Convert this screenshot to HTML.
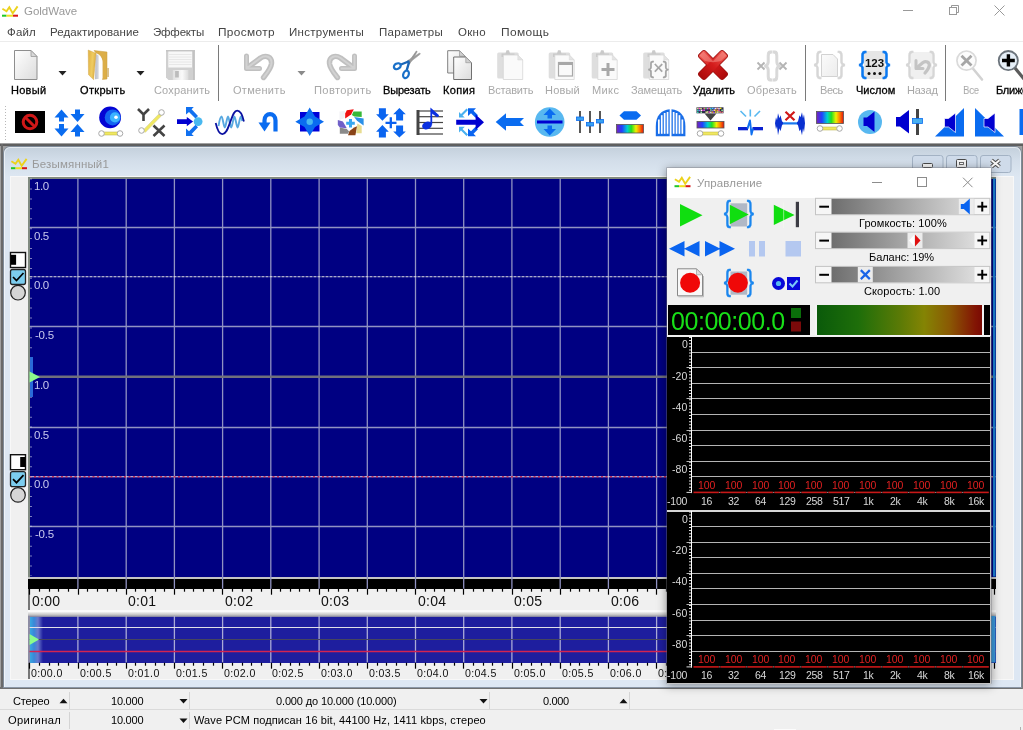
<!DOCTYPE html>
<html><head><meta charset="utf-8"><title>GoldWave</title>
<style>
*{box-sizing:border-box;margin:0;padding:0}
html,body{width:1023px;height:730px;overflow:hidden;background:#fff;font-family:"Liberation Sans","DejaVu Sans",sans-serif;font-size:12px;color:#000}
.a{position:absolute}
.t{position:absolute;white-space:nowrap;line-height:1;will-change:transform}
#titlebar{left:0;top:0;width:1023px;height:22px;background:#fff}
#menubar{left:0;top:22px;width:1023px;height:20px;background:#fff}
#tb{left:0;top:41px;width:1023px;height:102px;background:#fff;border-top:1px solid #ececec}
#mdi{left:0;top:143px;width:1023px;height:547px;background:#a0a0a0}
#status{left:0;top:689px;width:1023px;height:41px;background:#f0f0f0}
svg{position:absolute;left:0;top:0;overflow:visible}
</style></head><body>
<div id="titlebar" class="a"></div><div id="menubar" class="a"></div><div id="tb" class="a"></div>
<div id="mdi" class="a"></div>
<div class="a" style="left:0;top:144px;width:1023px;height:2px;background:#5f5f5f"></div>
<div class="a" style="left:1px;top:144px;width:2px;height:545px;background:#6a6a6a"></div>
<div class="a" style="left:0;top:687px;width:1023px;height:2px;background:#707070"></div>
<div class="a" style="left:1021.500px;top:146px;width:1.500px;height:543px;background:#7c7c7c"></div>
<div class="a" style="left:3px;top:146px;width:1018.500px;height:541.500px;border-radius:7px 7px 0 0;background:linear-gradient(#c4d0dc 0px,#d3deea 14px,#dde7f2 30px,#dde7f3 100%);border:1px solid #7f8b99;border-bottom-color:#8a96a6"></div>
<div class="a" style="left:4px;top:147px;width:1016.500px;height:540px;border-radius:6px 6px 0 0;border:1px solid rgba(255,255,255,0.55);border-bottom:none"></div>
<div class="a" style="left:10px;top:176px;width:1004px;height:504px;background:#f0f0f0;border:1px solid #f8f8f8"></div>
<div class="a" style="left:28px;top:177px;width:968px;height:401px;background:#808a80"></div>
<div class="a" style="left:29.5px;top:178.500px;width:966px;height:398px;background:#000082"></div>
<div class="a" style="left:28px;top:576.500px;width:968px;height:2.200px;background:#c4c4c4"></div>
<div class="a" style="left:28px;top:578.700px;width:968px;height:10px;background:#000"></div>
<div class="a" style="left:28px;top:589px;width:1.500px;height:21px;background:#777"></div>
<div class="a" style="left:28px;top:609.500px;width:968px;height:2.500px;background:#fbfbfb"></div>
<div class="a" style="left:28px;top:612px;width:968px;height:51px;background:linear-gradient(#f2f2f2 0px,#c0c0c0 3px,#8c8ca4 4.500px,#8c8ca4 100%)"></div>
<div class="a" style="left:29.5px;top:616.600px;width:966px;height:46px;background:linear-gradient(90deg,#38a8e0 0px,#3888d8 4px,#6a78cc 8px,#1e1e9e 13px,#1e1e9e 100%)"></div>
<div class="a" style="left:28px;top:663px;width:1.500px;height:16px;background:#777"></div>
<svg width="1023" height="730" viewBox="0 0 1023 730">
<line x1="77.9" y1="178.500" x2="77.9" y2="589" stroke="#9092c2" stroke-width="1.300"/>
<line x1="77.9" y1="616" x2="77.9" y2="662.500" stroke="#aaaad6" stroke-width="1.300"/>
<line x1="126.2" y1="178.500" x2="126.2" y2="589" stroke="#9092c2" stroke-width="1.300"/>
<line x1="126.2" y1="616" x2="126.2" y2="662.500" stroke="#aaaad6" stroke-width="1.300"/>
<line x1="174.4" y1="178.500" x2="174.4" y2="589" stroke="#9092c2" stroke-width="1.300"/>
<line x1="174.4" y1="616" x2="174.4" y2="662.500" stroke="#aaaad6" stroke-width="1.300"/>
<line x1="222.6" y1="178.500" x2="222.6" y2="589" stroke="#9092c2" stroke-width="1.300"/>
<line x1="222.6" y1="616" x2="222.6" y2="662.500" stroke="#aaaad6" stroke-width="1.300"/>
<line x1="270.8" y1="178.500" x2="270.8" y2="589" stroke="#9092c2" stroke-width="1.300"/>
<line x1="270.8" y1="616" x2="270.8" y2="662.500" stroke="#aaaad6" stroke-width="1.300"/>
<line x1="319.1" y1="178.500" x2="319.1" y2="589" stroke="#9092c2" stroke-width="1.300"/>
<line x1="319.1" y1="616" x2="319.1" y2="662.500" stroke="#aaaad6" stroke-width="1.300"/>
<line x1="367.3" y1="178.500" x2="367.3" y2="589" stroke="#9092c2" stroke-width="1.300"/>
<line x1="367.3" y1="616" x2="367.3" y2="662.500" stroke="#aaaad6" stroke-width="1.300"/>
<line x1="415.5" y1="178.500" x2="415.5" y2="589" stroke="#9092c2" stroke-width="1.300"/>
<line x1="415.5" y1="616" x2="415.5" y2="662.500" stroke="#aaaad6" stroke-width="1.300"/>
<line x1="463.7" y1="178.500" x2="463.7" y2="589" stroke="#9092c2" stroke-width="1.300"/>
<line x1="463.7" y1="616" x2="463.7" y2="662.500" stroke="#aaaad6" stroke-width="1.300"/>
<line x1="511.9" y1="178.500" x2="511.9" y2="589" stroke="#9092c2" stroke-width="1.300"/>
<line x1="511.9" y1="616" x2="511.9" y2="662.500" stroke="#aaaad6" stroke-width="1.300"/>
<line x1="560.2" y1="178.500" x2="560.2" y2="589" stroke="#9092c2" stroke-width="1.300"/>
<line x1="560.2" y1="616" x2="560.2" y2="662.500" stroke="#aaaad6" stroke-width="1.300"/>
<line x1="608.4" y1="178.500" x2="608.4" y2="589" stroke="#9092c2" stroke-width="1.300"/>
<line x1="608.4" y1="616" x2="608.4" y2="662.500" stroke="#aaaad6" stroke-width="1.300"/>
<line x1="656.6" y1="178.500" x2="656.6" y2="589" stroke="#9092c2" stroke-width="1.300"/>
<line x1="656.6" y1="616" x2="656.6" y2="662.500" stroke="#aaaad6" stroke-width="1.300"/>
<line x1="704.9" y1="178.500" x2="704.9" y2="589" stroke="#9092c2" stroke-width="1.300"/>
<line x1="704.9" y1="616" x2="704.9" y2="662.500" stroke="#aaaad6" stroke-width="1.300"/>
<line x1="753.1" y1="178.500" x2="753.1" y2="589" stroke="#9092c2" stroke-width="1.300"/>
<line x1="753.1" y1="616" x2="753.1" y2="662.500" stroke="#aaaad6" stroke-width="1.300"/>
<line x1="801.3" y1="178.500" x2="801.3" y2="589" stroke="#9092c2" stroke-width="1.300"/>
<line x1="801.3" y1="616" x2="801.3" y2="662.500" stroke="#aaaad6" stroke-width="1.300"/>
<line x1="849.5" y1="178.500" x2="849.5" y2="589" stroke="#9092c2" stroke-width="1.300"/>
<line x1="849.5" y1="616" x2="849.5" y2="662.500" stroke="#aaaad6" stroke-width="1.300"/>
<line x1="897.8" y1="178.500" x2="897.8" y2="589" stroke="#9092c2" stroke-width="1.300"/>
<line x1="897.8" y1="616" x2="897.8" y2="662.500" stroke="#aaaad6" stroke-width="1.300"/>
<line x1="946.0" y1="178.500" x2="946.0" y2="589" stroke="#9092c2" stroke-width="1.300"/>
<line x1="946.0" y1="616" x2="946.0" y2="662.500" stroke="#aaaad6" stroke-width="1.300"/>
<line x1="29.500" y1="227.5" x2="995.500" y2="227.5" stroke="#9092c2" stroke-width="1.300"/>
<line x1="29.500" y1="326.5" x2="995.500" y2="326.5" stroke="#9092c2" stroke-width="1.300"/>
<line x1="29.500" y1="427.5" x2="995.500" y2="427.5" stroke="#9092c2" stroke-width="1.300"/>
<line x1="29.500" y1="526.5" x2="995.500" y2="526.5" stroke="#9092c2" stroke-width="1.300"/>
<line x1="29.500" y1="276.800" x2="995.500" y2="276.800" stroke="#e4e4e4" stroke-width="1.100" stroke-dasharray="3,1"/>
<line x1="29.500" y1="476.800" x2="995.500" y2="476.800" stroke="#e6dcea" stroke-width="1.100"/><line x1="29.500" y1="476.800" x2="995.500" y2="476.800" stroke="#c00c3c" stroke-width="1.200" stroke-dasharray="2,2.500"/>
<rect x="29.500" y="375.500" width="966" height="2.500" fill="#70707c"/>
<line x1="31" y1="178.600" x2="31" y2="576" stroke="#e0e0f4" stroke-width="1.100" stroke-dasharray="1,8.920"/>
<rect x="30" y="357" width="3" height="40" fill="#2a6ad8"/>
<path d="M29.500,371.500 L40,377 L29.500,382.500 Z" fill="#8cfc8c"/>
<line x1="29.500" y1="627.500" x2="995.500" y2="627.500" stroke="#e0e0e8" stroke-width="1.200"/>
<line x1="29.500" y1="639.500" x2="995.500" y2="639.500" stroke="#46465e" stroke-width="1.200"/>
<line x1="29.500" y1="651.500" x2="995.500" y2="651.500" stroke="#d42450" stroke-width="1.300"/>
<path d="M29.500,634 L39,639.500 L29.500,645 Z" fill="#8cfc8c"/>
<line x1="29.5" y1="588.700" x2="29.5" y2="594.7" stroke="#000" stroke-width="1.200"/>
<line x1="29.5" y1="662.700" x2="29.5" y2="668.7" stroke="#000" stroke-width="1.200"/>
<line x1="39.5" y1="588.700" x2="39.5" y2="591.7" stroke="#000" stroke-width="1.200"/>
<line x1="39.5" y1="662.700" x2="39.5" y2="665.7" stroke="#000" stroke-width="1.200"/>
<line x1="49.5" y1="588.700" x2="49.5" y2="591.7" stroke="#000" stroke-width="1.200"/>
<line x1="49.5" y1="662.700" x2="49.5" y2="665.7" stroke="#000" stroke-width="1.200"/>
<line x1="58.5" y1="588.700" x2="58.5" y2="591.7" stroke="#000" stroke-width="1.200"/>
<line x1="58.5" y1="662.700" x2="58.5" y2="665.7" stroke="#000" stroke-width="1.200"/>
<line x1="68.5" y1="588.700" x2="68.5" y2="591.7" stroke="#000" stroke-width="1.200"/>
<line x1="68.5" y1="662.700" x2="68.5" y2="665.7" stroke="#000" stroke-width="1.200"/>
<line x1="78.5" y1="588.700" x2="78.5" y2="594.7" stroke="#000" stroke-width="1.200"/>
<line x1="78.5" y1="662.700" x2="78.5" y2="668.7" stroke="#000" stroke-width="1.200"/>
<line x1="87.5" y1="588.700" x2="87.5" y2="591.7" stroke="#000" stroke-width="1.200"/>
<line x1="87.5" y1="662.700" x2="87.5" y2="665.7" stroke="#000" stroke-width="1.200"/>
<line x1="97.5" y1="588.700" x2="97.5" y2="591.7" stroke="#000" stroke-width="1.200"/>
<line x1="97.5" y1="662.700" x2="97.5" y2="665.7" stroke="#000" stroke-width="1.200"/>
<line x1="107.5" y1="588.700" x2="107.5" y2="591.7" stroke="#000" stroke-width="1.200"/>
<line x1="107.5" y1="662.700" x2="107.5" y2="665.7" stroke="#000" stroke-width="1.200"/>
<line x1="116.5" y1="588.700" x2="116.5" y2="591.7" stroke="#000" stroke-width="1.200"/>
<line x1="116.5" y1="662.700" x2="116.5" y2="665.7" stroke="#000" stroke-width="1.200"/>
<line x1="126.5" y1="588.700" x2="126.5" y2="594.7" stroke="#000" stroke-width="1.200"/>
<line x1="126.5" y1="662.700" x2="126.5" y2="668.7" stroke="#000" stroke-width="1.200"/>
<line x1="135.5" y1="588.700" x2="135.5" y2="591.7" stroke="#000" stroke-width="1.200"/>
<line x1="135.5" y1="662.700" x2="135.5" y2="665.7" stroke="#000" stroke-width="1.200"/>
<line x1="145.5" y1="588.700" x2="145.5" y2="591.7" stroke="#000" stroke-width="1.200"/>
<line x1="145.5" y1="662.700" x2="145.5" y2="665.7" stroke="#000" stroke-width="1.200"/>
<line x1="155.5" y1="588.700" x2="155.5" y2="591.7" stroke="#000" stroke-width="1.200"/>
<line x1="155.5" y1="662.700" x2="155.5" y2="665.7" stroke="#000" stroke-width="1.200"/>
<line x1="164.5" y1="588.700" x2="164.5" y2="591.7" stroke="#000" stroke-width="1.200"/>
<line x1="164.5" y1="662.700" x2="164.5" y2="665.7" stroke="#000" stroke-width="1.200"/>
<line x1="174.5" y1="588.700" x2="174.5" y2="594.7" stroke="#000" stroke-width="1.200"/>
<line x1="174.5" y1="662.700" x2="174.5" y2="668.7" stroke="#000" stroke-width="1.200"/>
<line x1="184.5" y1="588.700" x2="184.5" y2="591.7" stroke="#000" stroke-width="1.200"/>
<line x1="184.5" y1="662.700" x2="184.5" y2="665.7" stroke="#000" stroke-width="1.200"/>
<line x1="193.5" y1="588.700" x2="193.5" y2="591.7" stroke="#000" stroke-width="1.200"/>
<line x1="193.5" y1="662.700" x2="193.5" y2="665.7" stroke="#000" stroke-width="1.200"/>
<line x1="203.5" y1="588.700" x2="203.5" y2="591.7" stroke="#000" stroke-width="1.200"/>
<line x1="203.5" y1="662.700" x2="203.5" y2="665.7" stroke="#000" stroke-width="1.200"/>
<line x1="213.5" y1="588.700" x2="213.5" y2="591.7" stroke="#000" stroke-width="1.200"/>
<line x1="213.5" y1="662.700" x2="213.5" y2="665.7" stroke="#000" stroke-width="1.200"/>
<line x1="222.5" y1="588.700" x2="222.5" y2="594.7" stroke="#000" stroke-width="1.200"/>
<line x1="222.5" y1="662.700" x2="222.5" y2="668.7" stroke="#000" stroke-width="1.200"/>
<line x1="232.5" y1="588.700" x2="232.5" y2="591.7" stroke="#000" stroke-width="1.200"/>
<line x1="232.5" y1="662.700" x2="232.5" y2="665.7" stroke="#000" stroke-width="1.200"/>
<line x1="242.5" y1="588.700" x2="242.5" y2="591.7" stroke="#000" stroke-width="1.200"/>
<line x1="242.5" y1="662.700" x2="242.5" y2="665.7" stroke="#000" stroke-width="1.200"/>
<line x1="251.5" y1="588.700" x2="251.5" y2="591.7" stroke="#000" stroke-width="1.200"/>
<line x1="251.5" y1="662.700" x2="251.5" y2="665.7" stroke="#000" stroke-width="1.200"/>
<line x1="261.5" y1="588.700" x2="261.5" y2="591.7" stroke="#000" stroke-width="1.200"/>
<line x1="261.5" y1="662.700" x2="261.5" y2="665.7" stroke="#000" stroke-width="1.200"/>
<line x1="271.5" y1="588.700" x2="271.5" y2="594.7" stroke="#000" stroke-width="1.200"/>
<line x1="271.5" y1="662.700" x2="271.5" y2="668.7" stroke="#000" stroke-width="1.200"/>
<line x1="280.5" y1="588.700" x2="280.5" y2="591.7" stroke="#000" stroke-width="1.200"/>
<line x1="280.5" y1="662.700" x2="280.5" y2="665.7" stroke="#000" stroke-width="1.200"/>
<line x1="290.5" y1="588.700" x2="290.5" y2="591.7" stroke="#000" stroke-width="1.200"/>
<line x1="290.5" y1="662.700" x2="290.5" y2="665.7" stroke="#000" stroke-width="1.200"/>
<line x1="299.5" y1="588.700" x2="299.5" y2="591.7" stroke="#000" stroke-width="1.200"/>
<line x1="299.5" y1="662.700" x2="299.5" y2="665.7" stroke="#000" stroke-width="1.200"/>
<line x1="309.5" y1="588.700" x2="309.5" y2="591.7" stroke="#000" stroke-width="1.200"/>
<line x1="309.5" y1="662.700" x2="309.5" y2="665.7" stroke="#000" stroke-width="1.200"/>
<line x1="319.5" y1="588.700" x2="319.5" y2="594.7" stroke="#000" stroke-width="1.200"/>
<line x1="319.5" y1="662.700" x2="319.5" y2="668.7" stroke="#000" stroke-width="1.200"/>
<line x1="328.5" y1="588.700" x2="328.5" y2="591.7" stroke="#000" stroke-width="1.200"/>
<line x1="328.5" y1="662.700" x2="328.5" y2="665.7" stroke="#000" stroke-width="1.200"/>
<line x1="338.5" y1="588.700" x2="338.5" y2="591.7" stroke="#000" stroke-width="1.200"/>
<line x1="338.5" y1="662.700" x2="338.5" y2="665.7" stroke="#000" stroke-width="1.200"/>
<line x1="348.5" y1="588.700" x2="348.5" y2="591.7" stroke="#000" stroke-width="1.200"/>
<line x1="348.5" y1="662.700" x2="348.5" y2="665.7" stroke="#000" stroke-width="1.200"/>
<line x1="357.5" y1="588.700" x2="357.5" y2="591.7" stroke="#000" stroke-width="1.200"/>
<line x1="357.5" y1="662.700" x2="357.5" y2="665.7" stroke="#000" stroke-width="1.200"/>
<line x1="367.5" y1="588.700" x2="367.5" y2="594.7" stroke="#000" stroke-width="1.200"/>
<line x1="367.5" y1="662.700" x2="367.5" y2="668.7" stroke="#000" stroke-width="1.200"/>
<line x1="377.5" y1="588.700" x2="377.5" y2="591.7" stroke="#000" stroke-width="1.200"/>
<line x1="377.5" y1="662.700" x2="377.5" y2="665.7" stroke="#000" stroke-width="1.200"/>
<line x1="386.5" y1="588.700" x2="386.5" y2="591.7" stroke="#000" stroke-width="1.200"/>
<line x1="386.5" y1="662.700" x2="386.5" y2="665.7" stroke="#000" stroke-width="1.200"/>
<line x1="396.5" y1="588.700" x2="396.5" y2="591.7" stroke="#000" stroke-width="1.200"/>
<line x1="396.5" y1="662.700" x2="396.5" y2="665.7" stroke="#000" stroke-width="1.200"/>
<line x1="406.5" y1="588.700" x2="406.5" y2="591.7" stroke="#000" stroke-width="1.200"/>
<line x1="406.5" y1="662.700" x2="406.5" y2="665.7" stroke="#000" stroke-width="1.200"/>
<line x1="415.5" y1="588.700" x2="415.5" y2="594.7" stroke="#000" stroke-width="1.200"/>
<line x1="415.5" y1="662.700" x2="415.5" y2="668.7" stroke="#000" stroke-width="1.200"/>
<line x1="425.5" y1="588.700" x2="425.5" y2="591.7" stroke="#000" stroke-width="1.200"/>
<line x1="425.5" y1="662.700" x2="425.5" y2="665.7" stroke="#000" stroke-width="1.200"/>
<line x1="434.5" y1="588.700" x2="434.5" y2="591.7" stroke="#000" stroke-width="1.200"/>
<line x1="434.5" y1="662.700" x2="434.5" y2="665.7" stroke="#000" stroke-width="1.200"/>
<line x1="444.5" y1="588.700" x2="444.5" y2="591.7" stroke="#000" stroke-width="1.200"/>
<line x1="444.5" y1="662.700" x2="444.5" y2="665.7" stroke="#000" stroke-width="1.200"/>
<line x1="454.5" y1="588.700" x2="454.5" y2="591.7" stroke="#000" stroke-width="1.200"/>
<line x1="454.5" y1="662.700" x2="454.5" y2="665.7" stroke="#000" stroke-width="1.200"/>
<line x1="463.5" y1="588.700" x2="463.5" y2="594.7" stroke="#000" stroke-width="1.200"/>
<line x1="463.5" y1="662.700" x2="463.5" y2="668.7" stroke="#000" stroke-width="1.200"/>
<line x1="473.5" y1="588.700" x2="473.5" y2="591.7" stroke="#000" stroke-width="1.200"/>
<line x1="473.5" y1="662.700" x2="473.5" y2="665.7" stroke="#000" stroke-width="1.200"/>
<line x1="483.5" y1="588.700" x2="483.5" y2="591.7" stroke="#000" stroke-width="1.200"/>
<line x1="483.5" y1="662.700" x2="483.5" y2="665.7" stroke="#000" stroke-width="1.200"/>
<line x1="492.5" y1="588.700" x2="492.5" y2="591.7" stroke="#000" stroke-width="1.200"/>
<line x1="492.5" y1="662.700" x2="492.5" y2="665.7" stroke="#000" stroke-width="1.200"/>
<line x1="502.5" y1="588.700" x2="502.5" y2="591.7" stroke="#000" stroke-width="1.200"/>
<line x1="502.5" y1="662.700" x2="502.5" y2="665.7" stroke="#000" stroke-width="1.200"/>
<line x1="512.5" y1="588.700" x2="512.5" y2="594.7" stroke="#000" stroke-width="1.200"/>
<line x1="512.5" y1="662.700" x2="512.5" y2="668.7" stroke="#000" stroke-width="1.200"/>
<line x1="521.5" y1="588.700" x2="521.5" y2="591.7" stroke="#000" stroke-width="1.200"/>
<line x1="521.5" y1="662.700" x2="521.5" y2="665.7" stroke="#000" stroke-width="1.200"/>
<line x1="531.5" y1="588.700" x2="531.5" y2="591.7" stroke="#000" stroke-width="1.200"/>
<line x1="531.5" y1="662.700" x2="531.5" y2="665.7" stroke="#000" stroke-width="1.200"/>
<line x1="541.5" y1="588.700" x2="541.5" y2="591.7" stroke="#000" stroke-width="1.200"/>
<line x1="541.5" y1="662.700" x2="541.5" y2="665.7" stroke="#000" stroke-width="1.200"/>
<line x1="550.5" y1="588.700" x2="550.5" y2="591.7" stroke="#000" stroke-width="1.200"/>
<line x1="550.5" y1="662.700" x2="550.5" y2="665.7" stroke="#000" stroke-width="1.200"/>
<line x1="560.5" y1="588.700" x2="560.5" y2="594.7" stroke="#000" stroke-width="1.200"/>
<line x1="560.5" y1="662.700" x2="560.5" y2="668.7" stroke="#000" stroke-width="1.200"/>
<line x1="570.5" y1="588.700" x2="570.5" y2="591.7" stroke="#000" stroke-width="1.200"/>
<line x1="570.5" y1="662.700" x2="570.5" y2="665.7" stroke="#000" stroke-width="1.200"/>
<line x1="579.5" y1="588.700" x2="579.5" y2="591.7" stroke="#000" stroke-width="1.200"/>
<line x1="579.5" y1="662.700" x2="579.5" y2="665.7" stroke="#000" stroke-width="1.200"/>
<line x1="589.5" y1="588.700" x2="589.5" y2="591.7" stroke="#000" stroke-width="1.200"/>
<line x1="589.5" y1="662.700" x2="589.5" y2="665.7" stroke="#000" stroke-width="1.200"/>
<line x1="598.5" y1="588.700" x2="598.5" y2="591.7" stroke="#000" stroke-width="1.200"/>
<line x1="598.5" y1="662.700" x2="598.5" y2="665.7" stroke="#000" stroke-width="1.200"/>
<line x1="608.5" y1="588.700" x2="608.5" y2="594.7" stroke="#000" stroke-width="1.200"/>
<line x1="608.5" y1="662.700" x2="608.5" y2="668.7" stroke="#000" stroke-width="1.200"/>
<line x1="618.5" y1="588.700" x2="618.5" y2="591.7" stroke="#000" stroke-width="1.200"/>
<line x1="618.5" y1="662.700" x2="618.5" y2="665.7" stroke="#000" stroke-width="1.200"/>
<line x1="627.5" y1="588.700" x2="627.5" y2="591.7" stroke="#000" stroke-width="1.200"/>
<line x1="627.5" y1="662.700" x2="627.5" y2="665.7" stroke="#000" stroke-width="1.200"/>
<line x1="637.5" y1="588.700" x2="637.5" y2="591.7" stroke="#000" stroke-width="1.200"/>
<line x1="637.5" y1="662.700" x2="637.5" y2="665.7" stroke="#000" stroke-width="1.200"/>
<line x1="647.5" y1="588.700" x2="647.5" y2="591.7" stroke="#000" stroke-width="1.200"/>
<line x1="647.5" y1="662.700" x2="647.5" y2="665.7" stroke="#000" stroke-width="1.200"/>
<line x1="656.5" y1="588.700" x2="656.5" y2="594.7" stroke="#000" stroke-width="1.200"/>
<line x1="656.5" y1="662.700" x2="656.5" y2="668.7" stroke="#000" stroke-width="1.200"/>
<line x1="666.5" y1="588.700" x2="666.5" y2="591.7" stroke="#000" stroke-width="1.200"/>
<line x1="666.5" y1="662.700" x2="666.5" y2="665.7" stroke="#000" stroke-width="1.200"/>
<line x1="676.5" y1="588.700" x2="676.5" y2="591.7" stroke="#000" stroke-width="1.200"/>
<line x1="676.5" y1="662.700" x2="676.5" y2="665.7" stroke="#000" stroke-width="1.200"/>
<line x1="685.5" y1="588.700" x2="685.5" y2="591.7" stroke="#000" stroke-width="1.200"/>
<line x1="685.5" y1="662.700" x2="685.5" y2="665.7" stroke="#000" stroke-width="1.200"/>
<line x1="695.5" y1="588.700" x2="695.5" y2="591.7" stroke="#000" stroke-width="1.200"/>
<line x1="695.5" y1="662.700" x2="695.5" y2="665.7" stroke="#000" stroke-width="1.200"/>
<line x1="705.5" y1="588.700" x2="705.5" y2="594.7" stroke="#000" stroke-width="1.200"/>
<line x1="705.5" y1="662.700" x2="705.5" y2="668.7" stroke="#000" stroke-width="1.200"/>
<line x1="714.5" y1="588.700" x2="714.5" y2="591.7" stroke="#000" stroke-width="1.200"/>
<line x1="714.5" y1="662.700" x2="714.5" y2="665.7" stroke="#000" stroke-width="1.200"/>
<line x1="724.5" y1="588.700" x2="724.5" y2="591.7" stroke="#000" stroke-width="1.200"/>
<line x1="724.5" y1="662.700" x2="724.5" y2="665.7" stroke="#000" stroke-width="1.200"/>
<line x1="733.5" y1="588.700" x2="733.5" y2="591.7" stroke="#000" stroke-width="1.200"/>
<line x1="733.5" y1="662.700" x2="733.5" y2="665.7" stroke="#000" stroke-width="1.200"/>
<line x1="743.5" y1="588.700" x2="743.5" y2="591.7" stroke="#000" stroke-width="1.200"/>
<line x1="743.5" y1="662.700" x2="743.5" y2="665.7" stroke="#000" stroke-width="1.200"/>
<line x1="753.5" y1="588.700" x2="753.5" y2="594.7" stroke="#000" stroke-width="1.200"/>
<line x1="753.5" y1="662.700" x2="753.5" y2="668.7" stroke="#000" stroke-width="1.200"/>
<line x1="762.5" y1="588.700" x2="762.5" y2="591.7" stroke="#000" stroke-width="1.200"/>
<line x1="762.5" y1="662.700" x2="762.5" y2="665.7" stroke="#000" stroke-width="1.200"/>
<line x1="772.5" y1="588.700" x2="772.5" y2="591.7" stroke="#000" stroke-width="1.200"/>
<line x1="772.5" y1="662.700" x2="772.5" y2="665.7" stroke="#000" stroke-width="1.200"/>
<line x1="782.5" y1="588.700" x2="782.5" y2="591.7" stroke="#000" stroke-width="1.200"/>
<line x1="782.5" y1="662.700" x2="782.5" y2="665.7" stroke="#000" stroke-width="1.200"/>
<line x1="791.5" y1="588.700" x2="791.5" y2="591.7" stroke="#000" stroke-width="1.200"/>
<line x1="791.5" y1="662.700" x2="791.5" y2="665.7" stroke="#000" stroke-width="1.200"/>
<line x1="801.5" y1="588.700" x2="801.5" y2="594.7" stroke="#000" stroke-width="1.200"/>
<line x1="801.5" y1="662.700" x2="801.5" y2="668.7" stroke="#000" stroke-width="1.200"/>
<line x1="811.5" y1="588.700" x2="811.5" y2="591.7" stroke="#000" stroke-width="1.200"/>
<line x1="811.5" y1="662.700" x2="811.5" y2="665.7" stroke="#000" stroke-width="1.200"/>
<line x1="820.5" y1="588.700" x2="820.5" y2="591.7" stroke="#000" stroke-width="1.200"/>
<line x1="820.5" y1="662.700" x2="820.5" y2="665.7" stroke="#000" stroke-width="1.200"/>
<line x1="830.5" y1="588.700" x2="830.5" y2="591.7" stroke="#000" stroke-width="1.200"/>
<line x1="830.5" y1="662.700" x2="830.5" y2="665.7" stroke="#000" stroke-width="1.200"/>
<line x1="840.5" y1="588.700" x2="840.5" y2="591.7" stroke="#000" stroke-width="1.200"/>
<line x1="840.5" y1="662.700" x2="840.5" y2="665.7" stroke="#000" stroke-width="1.200"/>
<line x1="849.5" y1="588.700" x2="849.5" y2="594.7" stroke="#000" stroke-width="1.200"/>
<line x1="849.5" y1="662.700" x2="849.5" y2="668.7" stroke="#000" stroke-width="1.200"/>
<line x1="859.5" y1="588.700" x2="859.5" y2="591.7" stroke="#000" stroke-width="1.200"/>
<line x1="859.5" y1="662.700" x2="859.5" y2="665.7" stroke="#000" stroke-width="1.200"/>
<line x1="869.5" y1="588.700" x2="869.5" y2="591.7" stroke="#000" stroke-width="1.200"/>
<line x1="869.5" y1="662.700" x2="869.5" y2="665.7" stroke="#000" stroke-width="1.200"/>
<line x1="878.5" y1="588.700" x2="878.5" y2="591.7" stroke="#000" stroke-width="1.200"/>
<line x1="878.5" y1="662.700" x2="878.5" y2="665.7" stroke="#000" stroke-width="1.200"/>
<line x1="888.5" y1="588.700" x2="888.5" y2="591.7" stroke="#000" stroke-width="1.200"/>
<line x1="888.5" y1="662.700" x2="888.5" y2="665.7" stroke="#000" stroke-width="1.200"/>
<line x1="897.5" y1="588.700" x2="897.5" y2="594.7" stroke="#000" stroke-width="1.200"/>
<line x1="897.5" y1="662.700" x2="897.5" y2="668.7" stroke="#000" stroke-width="1.200"/>
<line x1="907.5" y1="588.700" x2="907.5" y2="591.7" stroke="#000" stroke-width="1.200"/>
<line x1="907.5" y1="662.700" x2="907.5" y2="665.7" stroke="#000" stroke-width="1.200"/>
<line x1="917.5" y1="588.700" x2="917.5" y2="591.7" stroke="#000" stroke-width="1.200"/>
<line x1="917.5" y1="662.700" x2="917.5" y2="665.7" stroke="#000" stroke-width="1.200"/>
<line x1="926.5" y1="588.700" x2="926.5" y2="591.7" stroke="#000" stroke-width="1.200"/>
<line x1="926.5" y1="662.700" x2="926.5" y2="665.7" stroke="#000" stroke-width="1.200"/>
<line x1="936.5" y1="588.700" x2="936.5" y2="591.7" stroke="#000" stroke-width="1.200"/>
<line x1="936.5" y1="662.700" x2="936.5" y2="665.7" stroke="#000" stroke-width="1.200"/>
<line x1="946.5" y1="588.700" x2="946.5" y2="594.7" stroke="#000" stroke-width="1.200"/>
<line x1="946.5" y1="662.700" x2="946.5" y2="668.7" stroke="#000" stroke-width="1.200"/>
<line x1="955.5" y1="588.700" x2="955.5" y2="591.7" stroke="#000" stroke-width="1.200"/>
<line x1="955.5" y1="662.700" x2="955.5" y2="665.7" stroke="#000" stroke-width="1.200"/>
<line x1="965.5" y1="588.700" x2="965.5" y2="591.7" stroke="#000" stroke-width="1.200"/>
<line x1="965.5" y1="662.700" x2="965.5" y2="665.7" stroke="#000" stroke-width="1.200"/>
<line x1="975.5" y1="588.700" x2="975.5" y2="591.7" stroke="#000" stroke-width="1.200"/>
<line x1="975.5" y1="662.700" x2="975.5" y2="665.7" stroke="#000" stroke-width="1.200"/>
<line x1="984.5" y1="588.700" x2="984.5" y2="591.7" stroke="#000" stroke-width="1.200"/>
<line x1="984.5" y1="662.700" x2="984.5" y2="665.7" stroke="#000" stroke-width="1.200"/>
<line x1="994.5" y1="588.700" x2="994.5" y2="594.7" stroke="#000" stroke-width="1.200"/>
<line x1="994.5" y1="662.700" x2="994.5" y2="668.7" stroke="#000" stroke-width="1.200"/>
<rect x="993" y="178.500" width="2.500" height="398" fill="#1c86d8"/>
<rect x="991" y="616" width="4.500" height="46.500" fill="#3c9ce0"/>
<rect x="10.500" y="252.5" width="15" height="15" fill="#fff" stroke="#111" stroke-width="1.400"/>
<rect x="10.8" y="254.8" width="5.300" height="10" fill="#000"/>
<rect x="10.500" y="269.5" width="15" height="15" rx="2" fill="#7ccdee" stroke="#222" stroke-width="1.300"/>
<path d="M13,277.0 L16.500,280.5 L23.500,273.0" fill="none" stroke="#000" stroke-width="1.700"/>
<circle cx="18" cy="292.7" r="7.300" fill="#d6d6d6" stroke="#222" stroke-width="1.200"/>
<rect x="10.500" y="454.7" width="15" height="15" fill="#fff" stroke="#111" stroke-width="1.400"/>
<rect x="20.2" y="457.0" width="5.300" height="10" fill="#000"/>
<rect x="10.500" y="471.7" width="15" height="15" rx="2" fill="#7ccdee" stroke="#222" stroke-width="1.300"/>
<path d="M13,479.2 L16.500,482.7 L23.500,475.2" fill="none" stroke="#000" stroke-width="1.700"/>
<circle cx="18" cy="494.9" r="7.300" fill="#d6d6d6" stroke="#222" stroke-width="1.200"/>
<g transform="translate(9,152.500)"><polyline points="2.4,8.8 6.5,11.3 9.3,7.3 12.7,13.2 17.6,6.4" fill="none" stroke="#ecd21c" stroke-width="1.900"/><rect x="2" y="14.700" width="4.500" height="2" fill="#20c828"/><rect x="6.500" y="14.700" width="6.500" height="2" fill="#f0e020"/><rect x="13" y="14.700" width="5" height="2" fill="#d81818"/></g>
<rect x="912.5" y="155.500" width="30.500" height="17" rx="2.500" fill="#cfdbea" stroke="#a3b2c4" stroke-width="1"/>
<rect x="946.5" y="155.500" width="30.500" height="17" rx="2.500" fill="#cfdbea" stroke="#a3b2c4" stroke-width="1"/>
<rect x="980.5" y="155.500" width="30.500" height="17" rx="2.500" fill="#cfdbea" stroke="#a3b2c4" stroke-width="1"/>
<rect x="922.500" y="163.500" width="10" height="4" rx="1" fill="#f4f4f4" stroke="#4a4a4a" stroke-width="1"/>
<rect x="956.500" y="159.500" width="10" height="8" rx="1" fill="#f4f4f4" stroke="#4a4a4a" stroke-width="1"/><rect x="959.500" y="162.500" width="4" height="2" fill="#fff" stroke="#4a4a4a" stroke-width="0.800"/>
<path d="M991.500,160.300 L999.500,166.800 M999.500,160.300 L991.500,166.800" stroke="#4a4a4a" stroke-width="4" /><path d="M991.500,160.300 L999.500,166.800 M999.500,160.300 L991.500,166.800" stroke="#f8f8f8" stroke-width="2"/>
</svg>
<div id="status" class="a"><div class="a" style="left:0;top:20px;width:1023px;height:1px;background:#dadada"></div>
<div class="a" style="left:69px;top:3px;width:1px;height:17px;background:#d4d4d4"></div>
<div class="a" style="left:189px;top:3px;width:1px;height:17px;background:#d4d4d4"></div>
<div class="a" style="left:489px;top:3px;width:1px;height:17px;background:#d4d4d4"></div>
<div class="a" style="left:629px;top:3px;width:1px;height:17px;background:#d4d4d4"></div>
<div class="a" style="left:69px;top:23px;width:1px;height:17px;background:#d4d4d4"></div>
<div class="a" style="left:189px;top:23px;width:1px;height:17px;background:#d4d4d4"></div>
<div class="a" style="left:774px;top:39.500px;width:22px;height:1.500px;background:#fcfcfc"></div>
<div class="a" style="left:1020px;top:38px;width:1px;height:3px;background:#b0b0b0"></div>
<svg width="1023" height="41" viewBox="0 689 1023 41">
<g fill="#111">
<path d="M59.500,703.300 h8 l-4,-4.500 z"/>
<path d="M179.500,699 h8 l-4,4.500 z"/>
<path d="M479.500,699 h8 l-4,4.500 z"/>
<path d="M619.500,703.300 h8 l-4,-4.500 z"/>
<path d="M179.500,718.500 h8 l-4,4.500 z"/>
</g></svg>
</div>
<svg width="1023" height="145" viewBox="0 0 1023 145">
<defs>
<linearGradient id="pg" x1="0" y1="0" x2="1" y2="1"><stop offset="0" stop-color="#ffffff"/><stop offset="1" stop-color="#dcdcdc"/></linearGradient>
<linearGradient id="pgd" x1="0" y1="0" x2="1" y2="1"><stop offset="0" stop-color="#fbfbfb"/><stop offset="1" stop-color="#ececec"/></linearGradient>
<linearGradient id="fold" x1="0" y1="0" x2="1" y2="0.3"><stop offset="0" stop-color="#e0b040"/><stop offset="0.6" stop-color="#efcc62"/><stop offset="1" stop-color="#dcae44"/></linearGradient>
<linearGradient id="redx" x1="0" y1="0" x2="0" y2="1"><stop offset="0" stop-color="#f0504a"/><stop offset="0.5" stop-color="#d01818"/><stop offset="1" stop-color="#a80808"/></linearGradient>
<linearGradient id="gray1" x1="0" y1="0" x2="0" y2="1"><stop offset="0" stop-color="#dedede"/><stop offset="1" stop-color="#c2c2c2"/></linearGradient>
<linearGradient id="rb" x1="0" y1="0" x2="1" y2="0"><stop offset="0" stop-color="#7a22b8"/><stop offset="0.2" stop-color="#2040ff"/><stop offset="0.4" stop-color="#00d0d0"/><stop offset="0.55" stop-color="#20e020"/><stop offset="0.72" stop-color="#f0f000"/><stop offset="0.86" stop-color="#ff8000"/><stop offset="1" stop-color="#e01010"/></linearGradient>
<linearGradient id="paper" x1="0" y1="0" x2="1" y2="0"><stop offset="0" stop-color="#b8bcc8"/><stop offset="0.45" stop-color="#d4d6dc"/><stop offset="0.5" stop-color="#ffffff"/><stop offset="1" stop-color="#ffffff"/></linearGradient>
<linearGradient id="xg" x1="0" y1="0" x2="0" y2="1"><stop offset="0" stop-color="#f46a60"/><stop offset="0.45" stop-color="#d82020"/><stop offset="1" stop-color="#a00808"/></linearGradient><linearGradient id="shut" x1="0" y1="0" x2="1" y2="0"><stop offset="0" stop-color="#e0e0e0"/><stop offset="0.6" stop-color="#fafafa"/><stop offset="1" stop-color="#dcdcdc"/></linearGradient><linearGradient id="xga" x1="0" y1="0" x2="1" y2="0"><stop offset="0" stop-color="#ee5850"/><stop offset="0.5" stop-color="#d41c1c"/><stop offset="1" stop-color="#ac0a0a"/></linearGradient><linearGradient id="xgb" x1="1" y1="0" x2="0" y2="0"><stop offset="0" stop-color="#ee5850"/><stop offset="0.5" stop-color="#d41c1c"/><stop offset="1" stop-color="#ac0a0a"/></linearGradient></defs>
<!-- title icon -->
<g id="logo"><polyline points="2.4,8.8 6.5,11.3 9.3,7.3 12.7,13.2 17.6,6.4" fill="none" stroke="#ecd21c" stroke-width="1.900"/><rect x="2" y="14.700" width="4.500" height="2" fill="#20c828"/><rect x="6.500" y="14.700" width="6.500" height="2" fill="#f0e020"/><rect x="13" y="14.700" width="5" height="2" fill="#d81818"/></g>
<!-- window controls -->
<g stroke="#999" stroke-width="1" fill="none"><line x1="903" y1="10.5" x2="913" y2="10.5"/><rect x="949.5" y="7.5" width="7" height="7"/><polyline points="951.5,7.500 951.5,5.5 958.5,5.5 958.5,12.5 956.5,12.5"/><path d="M994.500,5.500 L1004.500,15.500 M1004.500,5.500 L994.500,15.500"/></g>
<!-- New -->
<path d="M14.500,50.500 H31 L37,56.500 V79.500 H14.500 Z" fill="url(#pg)" stroke="#8e8e8e"/>
<path d="M31,50.500 V56.500 H37 Z" fill="#d8d8d8" stroke="#9a9a9a" stroke-width="0.8"/>
<path d="M58.500,71 h8 l-4,4.500 z" fill="#222"/>
<!-- Open -->
<path d="M94,50.500 L107,52 V79 L102.500,79.500 V62 C102.500,57 100,54 96,53 Z" fill="#dcae48" stroke="#c89c3c" stroke-width="0.500"/>
<path d="M95.500,54 C99,55 102.500,58 102.500,62 V78.500 L95,79.200 Z" fill="url(#paper)"/>
<path d="M88.200,50 L96,53.300 L93.700,79.800 L88.500,74.700 Z" fill="url(#fold)" stroke="#cfa040" stroke-width="0.400"/>
<rect x="107" y="68" width="2" height="9" fill="#d9c08a"/>
<path d="M136.500,71 h8 l-4,4.500 z" fill="#222"/>
<!-- Save disabled -->
<g><path d="M166,50 H194.800 V80 H168.500 L166,77.500 Z" fill="#d0d0d0"/><rect x="193" y="50" width="1.800" height="30" fill="#c2c2c2"/><rect x="166" y="50" width="28.800" height="1.500" fill="#c4c4c4"/><rect x="168.300" y="51.500" width="23.700" height="16" fill="#f7f7f7"/><g stroke="#e2e2e2" stroke-width="0.800"><line x1="169" y1="54.500" x2="191.500" y2="54.500"/><line x1="169" y1="57" x2="191.500" y2="57"/><line x1="169" y1="59.500" x2="191.500" y2="59.500"/><line x1="169" y1="62" x2="191.500" y2="62"/><line x1="169" y1="64.500" x2="191.500" y2="64.500"/></g><rect x="172.800" y="70" width="15.600" height="10" fill="url(#shut)"/><rect x="175.100" y="71" width="3.700" height="6.500" fill="#bcbcbc"/></g>
<!-- separators -->
<rect x="218" y="45" width="1" height="56" fill="#7a7a7a"/>
<rect x="805" y="45" width="1" height="56" fill="#7a7a7a"/>
<rect x="945" y="45" width="1" height="56" fill="#7a7a7a"/>
<!-- Undo disabled -->
<g id="undo" fill="none" stroke-linejoin="round" stroke-linecap="round"><path d="M247,68 L260.500,58 C266,54.500 272,57 271.500,63.500 C271,68.500 267,73 263.500,77.500" stroke="#c0c0c0" stroke-width="5.400"/><path d="M246.500,56 V68.500 H259.500" stroke="#c0c0c0" stroke-width="5"/><path d="M247,68 L260.500,58 C266,54.500 272,57 271.500,63.500 C271,68.500 267,73 263.500,77.500 M246.500,56 V68.500 H259.500" stroke="#d2d2d2" stroke-width="2"/></g>
<path d="M297.500,71 h8 l-4,4.500 z" fill="#8a8a8a"/>
<!-- Redo disabled -->
<use href="#undo" transform="translate(601,0) scale(-1,1)"/>
<!-- Cut -->
<g><path d="M408,63 L416.300,51 L417.200,51.600 L409.600,64 Z" fill="#8e8e8e" stroke="#8e8e8e" stroke-width="0.600"/><path d="M407,61 L419.600,53 L420.400,54 L408.500,63.300 Z" fill="#9a9a9a" stroke="#9a9a9a" stroke-width="0.600"/>
<path d="M401,64.500 L408.500,61.500 M406.800,70 L408.800,63" stroke="#1a66b8" stroke-width="2.400" stroke-linecap="round"/>
<ellipse cx="397.300" cy="66.200" rx="3.600" ry="2.700" fill="#fff" stroke="#1a70c8" stroke-width="2.200" transform="rotate(-28 397.300 66.200)"/>
<ellipse cx="406" cy="74.400" rx="2.700" ry="3.900" fill="#fff" stroke="#1a70c8" stroke-width="2.200" transform="rotate(22 406 74.400)"/></g>
<!-- Copy -->
<path d="M447.700,50.700 H459.500 L465,56.200 V73 H447.700 Z" fill="url(#pg)" stroke="#808080"/>
<path d="M459.500,50.700 V56.200 H465 Z" fill="#d0d0d0" stroke="#999" stroke-width="0.700"/>
<path d="M453.700,57 H465.800 L471.500,62.700 V79.500 H453.700 Z" fill="url(#pg)" stroke="#707070"/>
<path d="M465.800,57 V62.700 H471.500 Z" fill="#d0d0d0" stroke="#999" stroke-width="0.700"/>
<!-- Paste disabled -->
<g id="clip"><rect x="497.200" y="52.500" width="21.500" height="26" rx="1.500" fill="#dedede"/><path d="M501.500,57 V53.500 H505.500 L506.500,50.300 H509 L510,53.500 H514.500 V57 Z" fill="#cacaca"/><path d="M503.300,55 H517.800 L522.700,60 V79.500 H503.300 Z" fill="#fafafa" stroke="#d6d6d6" stroke-width="0.800"/><path d="M517.800,55 V60 H522.700 Z" fill="#e4e4e4" stroke="#d6d6d6" stroke-width="0.500"/></g>
<use href="#clip" x="51.500"/>
<rect x="558.500" y="62.500" width="14" height="13.500" fill="#fafafa" stroke="#a8a8a8" stroke-width="1.200"/><rect x="558" y="62" width="15" height="3" fill="#a8a8a8"/>
<use href="#clip" x="94.500"/>
<path d="M606.500,63 h3 v5 h5 v3 h-5 v5 h-3 v-5 h-5 v-3 h5 z" fill="#a8a8a8"/>
<use href="#clip" x="146"/>
<!-- Delete -->
<g transform="translate(713,65)"><g stroke="#9c1212" stroke-width="1.600" fill="#9c1212"><rect x="-17" y="-4.200" width="34" height="8.400" rx="2.200" transform="rotate(45)"/><rect x="-17" y="-4.200" width="34" height="8.400" rx="2.200" transform="rotate(-45)"/></g>
<g><rect x="-17" y="-4.200" width="34" height="8.400" rx="2.200" transform="rotate(45)" fill="url(#xga)"/><rect x="-17" y="-4.200" width="34" height="8.400" rx="2.200" transform="rotate(-45)" fill="url(#xgb)"/></g>
<path d="M-13.500,-9.500 L-9.500,-13.500 L0,-4 L9.500,-13.500 L13.500,-9.500 L8,-4 C3,-2.500 -3,-2.500 -8,-4 Z" fill="#ffb8b0" opacity="0.380"/></g>
<!-- Весь disabled page -->
<path d="M821.500,54.500 H833 L837.500,59 V76.500 H821.500 Z" fill="url(#pgd)" stroke="#d2d2d2"/>
<!-- Числом -->
<rect x="864" y="51" width="21" height="28" fill="#e6e6e6"/>
<circle cx="869" cy="73.500" r="1.500" fill="#111"/><circle cx="874.500" cy="73.500" r="1.500" fill="#111"/><circle cx="880" cy="73.500" r="1.500" fill="#111"/>
<!-- Назад disabled -->
<rect x="911" y="52" width="21" height="27" fill="#f0f0f0"/>
<g fill="none" stroke="#c4c4c4" stroke-linejoin="round" stroke-linecap="round"><path d="M916.500,68 L923,62.500 C926,60.500 929.500,62 929.300,65.500 C929,68.500 927,70.500 925,73" stroke-width="3.200"/><path d="M916,60.500 V68.500 H923" stroke-width="3"/></g>
<!-- Все disabled magnifier -->
<path d="M972.500,68 L982,79.500" stroke="#d2d2d2" stroke-width="2.600" stroke-linecap="round"/>
<circle cx="966.500" cy="60.600" r="9.600" fill="#fcfcfc" stroke="#dadada" stroke-width="1.700"/>
<path d="M961.500,55.800 L971.500,65.400 M971.500,55.800 L961.500,65.400" stroke="#a6a6a6" stroke-width="2.800"/>
<!-- Ближе -->
<path d="M1015,68 L1024,79" stroke="#5c5c5c" stroke-width="3.200" stroke-linecap="round"/>
<circle cx="1008.300" cy="60.600" r="9.600" fill="#e6eff8" stroke="#6c747c" stroke-width="1.800"/>
<path d="M1002,60.500 H1014.800 M1008.400,54.200 V66.600" stroke="#000" stroke-width="3.400"/>
</svg>

<svg width="1023" height="145" viewBox="0 0 1023 145" font-family="Liberation Sans, sans-serif" style="will-change:transform">
<!-- Replace {x} -->
<text x="658" y="74" font-size="18" fill="#a2a2a2" stroke="#a2a2a2" stroke-width="0.300" text-anchor="middle" letter-spacing="-0.8">{×}</text>
<!-- Trim -->
<text transform="translate(768.2,73.5) scale(0.780,1)" font-size="31" fill="#d8d8d8" stroke="#d8d8d8" stroke-width="1.100" text-anchor="middle">{</text>
<text transform="translate(776.8,73.5) scale(0.780,1)" font-size="31" fill="#d8d8d8" stroke="#d8d8d8" stroke-width="1.100" text-anchor="middle">}</text>
<path d="M757.500,62.500 L764.500,69.500 M764.500,62.500 L757.500,69.500 M779.500,62.500 L786.500,69.500 M786.500,62.500 L779.500,69.500" stroke="#b4b4b4" stroke-width="1.800"/>
<!-- Весь braces -->
<text transform="translate(817.6,73.0) scale(0.780,1)" font-size="30" fill="#d6d6d6" stroke="#d6d6d6" stroke-width="0.500" text-anchor="middle">{</text>
<text transform="translate(841.4,73.0) scale(0.780,1)" font-size="30" fill="#d6d6d6" stroke="#d6d6d6" stroke-width="0.500" text-anchor="middle">}</text>
<!-- Числом braces -->
<text transform="translate(862.6,72.5) scale(0.780,1)" font-size="30" fill="#0a78f0" stroke="#0a78f0" stroke-width="0.7" text-anchor="middle">{</text>
<text transform="translate(886.4,72.5) scale(0.780,1)" font-size="30" fill="#0a78f0" stroke="#0a78f0" stroke-width="0.7" text-anchor="middle">}</text>
<text x="874.500" y="67" font-size="11.500" font-weight="bold" fill="#111" text-anchor="middle">123</text>
<!-- Назад braces -->
<text transform="translate(909.6,73.0) scale(0.780,1)" font-size="30" fill="#d6d6d6" stroke="#d6d6d6" stroke-width="0.500" text-anchor="middle">{</text>
<text transform="translate(933.4,73.0) scale(0.780,1)" font-size="30" fill="#d6d6d6" stroke="#d6d6d6" stroke-width="0.500" text-anchor="middle">}</text>
</svg>

<svg width="1023" height="145" viewBox="0 0 1023 145">
<!-- grip -->
<g fill="#b8b8b8"><rect x="5" y="106" width="1" height="1"/><rect x="5" y="109" width="1" height="1"/><rect x="5" y="112" width="1" height="1"/><rect x="5" y="115" width="1" height="1"/><rect x="5" y="118" width="1" height="1"/><rect x="5" y="121" width="1" height="1"/><rect x="5" y="124" width="1" height="1"/><rect x="5" y="127" width="1" height="1"/><rect x="5" y="130" width="1" height="1"/><rect x="5" y="133" width="1" height="1"/><rect x="5" y="136" width="1" height="1"/><rect x="5" y="139" width="1" height="1"/></g>
<!-- 1 no sign -->
<rect x="15" y="111" width="30" height="22" fill="#000"/>
<circle cx="30" cy="122" r="6.800" fill="none" stroke="#d01818" stroke-width="3"/>
<path d="M25.200,117.200 L34.800,126.800" stroke="#d01818" stroke-width="3"/>
<!-- 2 arrows -->
<g fill="#0a6cf0">
<path d="M61.500,109.500 L68.500,117.500 H64 V121.500 H59 V117.500 H54.500 Z"/>
<path d="M61.500,136.500 L68.500,128.500 H64 V124 H59 V128.500 H54.500 Z"/>
<path d="M77.500,122 L84.500,114 H80 V109.500 H75 V114 H70.500 Z"/>
<path d="M77.500,124 L84.500,132 H80 V136.500 H75 V132 H70.500 Z"/>
</g>
<!-- 3 sphere -->
<circle cx="110.100" cy="117.400" r="10.900" fill="#0404d4"/><circle cx="112.700" cy="117.400" r="8" fill="#1464f0"/><circle cx="115" cy="117.400" r="5.100" fill="#3cb4ff"/><circle cx="116" cy="117.200" r="1.800" fill="#fff"/>
<rect x="101" y="132" width="19" height="3" fill="#f0e860" stroke="#b8b040" stroke-width="0.5"/>
<circle cx="101.500" cy="133.500" r="2.800" fill="#fff" stroke="#a8a8a8" stroke-width="1"/><circle cx="120" cy="133.500" r="2.800" fill="#fff" stroke="#a8a8a8" stroke-width="1"/>
<!-- 4 cue points -->
<path d="M138,109 L143.500,114.500 L149,109 M143.500,114.500 V121" fill="none" stroke="#444" stroke-width="2.600"/>
<path d="M144,131.500 L161.500,113.500" stroke="#f0e860" stroke-width="2.600"/><path d="M144,131.500 L161.500,113.500" stroke="#b8b040" stroke-width="0.400" fill="none" transform="translate(-1.100,-1.100)"/><path d="M144,131.500 L161.500,113.500" stroke="#b8b040" stroke-width="0.400" fill="none" transform="translate(1.100,1.100)"/>
<circle cx="161.500" cy="112.500" r="2.800" fill="#fff" stroke="#a8a8a8" stroke-width="1"/><circle cx="141.500" cy="130.500" r="2.800" fill="#fff" stroke="#a8a8a8" stroke-width="1"/>
<path d="M153.500,125.500 L164.500,136 M164.500,125.500 L153.500,136" stroke="#444" stroke-width="2.600"/>
<!-- 5 -->
<g id="i5h"><path d="M186,107.100 L193.800,107.100 L191.600,109.300 L198,116 L195.500,118.500 L189,112 L186,114.600 Z" fill="#1070f0"/></g>
<use href="#i5h" transform="translate(0,243.200) scale(1,-1)"/>
<path d="M177,119.200 H186.800 V116.900 L193.100,121.600 L186.800,126.300 V123.900 H177 Z" fill="#0000d0"/>
<circle cx="198.100" cy="121.600" r="4.400" fill="#48b8f0"/>
<!-- 6 wave -->
<path d="M218.500,126 C219.500,120 220.600,116.500 221.600,116.500 S223.800,127.500 224.800,127.500 S227,116.500 228,116.500 S230.200,127.500 231.200,127.500 S233.400,116.500 234.400,116.500 S236.600,127.500 237.600,127.500 S239.800,116.500 240.800,116.500 S241.800,119 242.200,121" fill="none" stroke="#58a8e0" stroke-width="1.900"/>
<path d="M215.700,123 C217.500,131 220,134.200 222.400,134.100 C226.500,134 228,128 230.200,122 C232.500,116 234,110.600 237.200,110.600 C240.500,110.600 242.500,115 243.900,121.500" fill="none" stroke="#0a10a0" stroke-width="1.800"/>
<!-- 7 u-turn -->
<path d="M275.500,131.500 V120.500 C275.500,112 264.500,112 264.500,120.500 V124" fill="none" stroke="#0a6cf0" stroke-width="4.200"/>
<path d="M258.500,122.500 H270.500 L264.500,131.500 Z" fill="#0a6cf0"/>
<!-- 8 star -->
<rect x="300" y="112" width="19.500" height="19.500" fill="#0000d8"/>
<path d="M309.700,107.500 L315,116.500 L324,121.800 L315,127 L309.700,136 L304.500,127 L295.300,121.800 L304.500,116.500 Z" fill="#0a6cf0"/>
<circle cx="309.700" cy="121.800" r="3.200" fill="#48b8f0"/>
<!-- 9 pinwheel -->
<g>
<path d="M339.400,111.400 L345,111 L344.500,118 L339.500,120 Z" fill="#f2f2f6"/>
<path d="M346.800,110.300 L353.800,109.300 L351.100,114.600 L345.200,118.500 L345.200,113.400 Z" fill="#f01010"/>
<path d="M353.500,111.400 L361.700,111.400 L361.700,116.900 L354.200,116.500 L351.900,114.900 Z" fill="#38b838"/>
<path d="M354.200,116.900 L363.600,118.500 L363.600,125.500 L357,120.800 Z" fill="#2a90e8"/>
<path d="M357.400,123.500 L361.700,125.900 L361.700,133.300 L356.200,133.300 L357,126.700 Z" fill="#e8dc90"/>
<path d="M357,126.300 L355.400,135.300 L348,135.300 L349.500,131 L354.200,127.500 Z" fill="#8a4418"/>
<path d="M339.800,127.500 L346.800,129 L349.200,131.400 L348,133.700 L339.800,133.700 Z" fill="#8a8a8a"/>
<path d="M337.800,120 L342.900,121.600 L346.800,128.200 L339.800,127.500 L337.800,125.100 Z" fill="#7060c8"/>
<path d="M350.500,118.900 V127.500 M346.200,123.200 H354.800" stroke="#38a8f0" stroke-width="3"/>
</g>
<!-- 10 arrows plus -->
<g fill="#0a64f0">
<path d="M378.900,108.300 H385.900 V114.200 H388.800 L382.400,120.800 L376.100,114.200 H378.900 Z"/>
<path d="M378.900,137.600 H385.900 V131.800 H388.800 L382.400,125.100 L376.100,131.800 H378.900 Z"/>
<path d="M399.400,107.900 L405.800,114.200 H403.100 V120.400 H396.100 V114.200 H393.200 Z"/>
<path d="M399.400,137.600 L405.800,131.400 H403.100 V125.500 H396.100 V131.400 H393.200 Z"/>
<path d="M390.800,117.300 V128.200 M385.500,122.800 H396.500" stroke="#0a60f0" stroke-width="2.300" fill="none"/>
</g>
</svg>

<svg width="1023" height="145" viewBox="0 0 1023 145">
<!-- 11 staff + note -->
<rect x="416.500" y="110" width="3" height="25" fill="#444"/>
<g stroke="#444" stroke-width="1.200"><line x1="419" y1="111" x2="443" y2="111"/><line x1="419" y1="116.700" x2="443" y2="116.700"/><line x1="419" y1="122.500" x2="443" y2="122.500"/><line x1="419" y1="128.300" x2="443" y2="128.300"/><line x1="419" y1="134" x2="443" y2="134"/></g>
<ellipse cx="427" cy="125.500" rx="5" ry="3.800" fill="#0a30e0" transform="rotate(-20 427 125.500)"/>
<path d="M431.300,124.500 V109.500 L438.500,116" fill="none" stroke="#0a30e0" stroke-width="1.800"/>
<path d="M431.300,109.500 L438.800,116.200 L437,117.200 L431.300,113 Z" fill="#0a30e0"/>
<!-- 12 arrow w/ diagonals -->
<g id="i12h"><path d="M459,117.600 L459,112 L461,114 L466.500,108.500 L468,110 L462.500,115.500 L464.800,117.600 Z" fill="#48b0f0"/><path d="M468,108.200 L476,108.200 L473.500,110.700 L478,115.200 L475.500,117.700 L471,113.200 L468,116 Z" fill="#0a64f0"/></g>
<use href="#i12h" transform="translate(0,244.400) scale(1,-1)"/>
<path d="M456.200,119.800 H475.600 V114.600 L484,122.200 L475.600,129.900 V124.700 H456.200 Z" fill="#0000d0"/>
<!-- 13 left arrow -->
<path d="M495.700,122 L506,113.300 V118 H524 L520,122 L524,126 H506 V130.700 Z" fill="#0a6cf0"/>
<!-- 14 circle up/down -->
<circle cx="549.700" cy="122" r="14.800" fill="#58b8f0"/>
<rect x="537" y="120.500" width="25.500" height="3" fill="#0000d0"/>
<g fill="#0a6cf0"><path d="M549.700,108.500 L556,115 H552 V118.500 H547.500 V115 H543.500 Z"/><path d="M549.700,135.500 L556,129 H552 V125.500 H547.500 V129 H543.500 Z"/></g>
<!-- 15 mixer -->
<g stroke="#444" stroke-width="1.800"><line x1="580" y1="111" x2="580" y2="133"/><line x1="590" y1="111" x2="590" y2="133"/><line x1="600" y1="111" x2="600" y2="133"/></g>
<g fill="#38a0f0" stroke="#0a6cf0" stroke-width="0.800"><rect x="576.500" y="117" width="7" height="3.500"/><rect x="586.500" y="122.500" width="7" height="3.500"/><rect x="596.500" y="119.500" width="7" height="3.500"/></g>
<!-- 16 hex + rainbow -->
<path d="M619.500,115.500 L624,111.300 H636.500 L641,115.500 L636.500,119.700 H624 Z" fill="#0a6cf0"/>
<rect x="616.500" y="124.500" width="27" height="8.500" fill="url(#rb)" stroke="#555" stroke-width="0.800"/>
<!-- 17 gate -->
<path d="M655.800,136.300 V126 C655.800,115.500 661.500,110 669.700,109.300 V136.300 Z" fill="#1a6ee8"/>
<path d="M685.400,136.300 V126 C685.400,115.500 679.700,110 671.500,109.300 V136.300 Z" fill="#1a6ee8"/>
<g fill="#fff"><rect x="658.0" y="119.5" width="1.700" height="14.3"/><rect x="681.5" y="119.5" width="1.700" height="14.3"/><rect x="660.9" y="115.2" width="1.700" height="18.6"/><rect x="678.6" y="115.2" width="1.700" height="18.6"/><rect x="663.8" y="113.0" width="1.700" height="20.8"/><rect x="675.7" y="113.0" width="1.700" height="20.8"/><rect x="666.7" y="112.0" width="1.700" height="21.8"/><rect x="672.8" y="112.0" width="1.700" height="21.8"/></g>
<!-- 18 noise + rainbow -->
<rect x="696.500" y="107.300" width="27" height="6" fill="#2c2c48"/>
<g><rect x="697.2" y="107.7" width="1.400" height="1.400" fill="#ffffa0"/><rect x="697.2" y="109.6" width="1.400" height="1.400" fill="#40f0c0"/><rect x="697.1" y="111.6" width="1.400" height="1.400" fill="#40f0c0"/><rect x="698.8" y="107.8" width="1.400" height="1.400" fill="#ff50d0"/><rect x="698.7" y="109.8" width="1.400" height="1.400" fill="#7070ff"/><rect x="700.3" y="107.9" width="1.400" height="1.400" fill="#ffffa0"/><rect x="700.6" y="109.7" width="1.400" height="1.400" fill="#ffffff"/><rect x="700.5" y="111.6" width="1.400" height="1.400" fill="#a0ffa0"/><rect x="702.2" y="109.6" width="1.400" height="1.400" fill="#ff50d0"/><rect x="703.5" y="107.7" width="1.400" height="1.400" fill="#ff8080"/><rect x="703.7" y="109.5" width="1.400" height="1.400" fill="#d060ff"/><rect x="705.3" y="107.8" width="1.400" height="1.400" fill="#50f050"/><rect x="705.5" y="111.5" width="1.400" height="1.400" fill="#ffffa0"/><rect x="706.8" y="107.9" width="1.400" height="1.400" fill="#d060ff"/><rect x="707.0" y="111.3" width="1.400" height="1.400" fill="#ffffa0"/><rect x="708.4" y="107.8" width="1.400" height="1.400" fill="#ff8080"/><rect x="708.7" y="111.4" width="1.400" height="1.400" fill="#ff50d0"/><rect x="710.1" y="107.8" width="1.400" height="1.400" fill="#40d0ff"/><rect x="710.2" y="109.4" width="1.400" height="1.400" fill="#a0ffa0"/><rect x="710.2" y="111.6" width="1.400" height="1.400" fill="#ffffff"/><rect x="712.0" y="107.7" width="1.400" height="1.400" fill="#40d0ff"/><rect x="711.8" y="109.8" width="1.400" height="1.400" fill="#7070ff"/><rect x="711.7" y="111.5" width="1.400" height="1.400" fill="#f0a020"/><rect x="713.6" y="108.0" width="1.400" height="1.400" fill="#7070ff"/><rect x="713.5" y="109.6" width="1.400" height="1.400" fill="#ffffa0"/><rect x="713.2" y="111.6" width="1.400" height="1.400" fill="#d060ff"/><rect x="715.1" y="107.9" width="1.400" height="1.400" fill="#ffffff"/><rect x="714.9" y="109.5" width="1.400" height="1.400" fill="#f0a020"/><rect x="715.0" y="111.4" width="1.400" height="1.400" fill="#f0e820"/><rect x="716.7" y="107.7" width="1.400" height="1.400" fill="#ff8080"/><rect x="716.6" y="109.7" width="1.400" height="1.400" fill="#f0a020"/><rect x="716.6" y="111.4" width="1.400" height="1.400" fill="#ffffa0"/><rect x="718.3" y="108.0" width="1.400" height="1.400" fill="#ffffff"/><rect x="718.2" y="109.6" width="1.400" height="1.400" fill="#ff50d0"/><rect x="718.2" y="111.3" width="1.400" height="1.400" fill="#ffffa0"/><rect x="720.0" y="107.6" width="1.400" height="1.400" fill="#f0e820"/><rect x="719.7" y="111.4" width="1.400" height="1.400" fill="#ff8080"/><rect x="721.4" y="109.6" width="1.400" height="1.400" fill="#a0ffa0"/><rect x="721.5" y="111.6" width="1.400" height="1.400" fill="#ff8080"/></g>
<path d="M704.500,113.500 H716.500 L710.500,120.500 Z" fill="#444"/>
<rect x="697" y="121.500" width="27" height="6.500" fill="url(#rb)" stroke="#555" stroke-width="0.800"/>
<rect x="700" y="132" width="21" height="3" fill="#f0e860" stroke="#b8b040" stroke-width="0.500"/>
<circle cx="700" cy="133.500" r="2.800" fill="#fff" stroke="#a8a8a8" stroke-width="1"/><circle cx="721" cy="133.500" r="2.800" fill="#fff" stroke="#a8a8a8" stroke-width="1"/>
<!-- 19 pop/click -->
<g stroke="#58b8f0" stroke-width="1.600"><line x1="750.300" y1="109.500" x2="750.300" y2="116.500"/><line x1="740.500" y1="111" x2="746" y2="116.500"/><line x1="760" y1="111" x2="754.500" y2="116.500"/></g>
<rect x="738" y="127" width="10" height="3.300" fill="#0a20d0"/><rect x="752.500" y="127" width="10.500" height="3.300" fill="#0a20d0"/>
<path d="M747.500,128.600 L750,120.500 L751.500,134.500 L753,128.600" fill="none" stroke="#1070f0" stroke-width="1.900" stroke-linejoin="round"/>
<!-- 20 silence -->
<g fill="#0a30d0" transform="translate(0,1.300)"><path d="M775,122 L776,116 L777,119 L778,112 L779.500,117 L780.500,114 L782,120 L783,121 L783,123 L782,124 L780.500,130 L779.500,127 L778,134 L777,125 L776,128 Z"/><path d="M805,122 L804,113 L803,117 L802,111 L800.500,116 L799.500,114 L798,120 L797,121 L797,123 L798,124 L799.500,130 L800.500,128 L802,134 L803,127 L804,131 Z"/></g>
<rect x="783" y="122.300" width="14" height="2.200" fill="#1878f0"/>
<path d="M785.500,111.800 L794.500,120.300 M794.500,111.800 L785.500,120.300" stroke="#d01818" stroke-width="2.200"/>
<!-- 21 rainbow -->
<rect x="816.500" y="111.500" width="27" height="12" fill="url(#rb)" stroke="#555" stroke-width="0.800"/>
<rect x="820" y="127" width="19" height="3" fill="#f0e860" stroke="#b8b040" stroke-width="0.500"/>
<circle cx="820" cy="128.500" r="2.800" fill="#fff" stroke="#a8a8a8" stroke-width="1"/><circle cx="839.500" cy="128.500" r="2.800" fill="#fff" stroke="#a8a8a8" stroke-width="1"/>
<!-- 22 speaker in circle -->
<circle cx="870" cy="122" r="12" fill="#58b8f0"/>
<path d="M863.500,117.500 H867 L874.500,111.500 V132 L867,126 H863.500 Z" fill="#0000d0"/>
<!-- 23 speaker + slider -->
<path d="M896,117 H900 L909,110 V133.500 L900,126.500 H896 Z" fill="#0000d0"/>
<rect x="916" y="109" width="3" height="26" fill="#444"/>
<rect x="912.500" y="118.500" width="10" height="5" fill="#48b0f0" stroke="#0a6cf0" stroke-width="0.800"/>
<!-- 24 fade in -->
<path d="M935,136.500 L964,108 V136.500 Z" fill="#0a6cf0"/>
<path d="M944.500,118.500 H948.500 L955.500,113 V132.500 L948.500,127 H944.500 Z" fill="#0000d0" stroke="#fff" stroke-width="0.700"/>
<!-- 25 fade out -->
<path d="M975,108 L1004,136.500 H975 Z" fill="#0a6cf0"/>
<path d="M984,118.500 H988 L995,113 V132.500 L988,127 H984 Z" fill="#0000d0" stroke="#fff" stroke-width="0.700"/>
<!-- 26 partial -->
<rect x="1019.500" y="109" width="4" height="26" fill="#0a6cf0"/>
</svg>

<span class="t" style="left:23.5px;top:5.8px;font-size:11.5px;color:#999;font-weight:normal;letter-spacing:-0.01px;">GoldWave</span>
<span class="t" style="left:7.0px;top:26.8px;font-size:11.5px;color:#444;font-weight:normal;letter-spacing:0.18px;">Файл</span>
<span class="t" style="left:50.0px;top:26.8px;font-size:11.5px;color:#444;font-weight:normal;letter-spacing:0.10px;">Редактирование</span>
<span class="t" style="left:153.0px;top:26.8px;font-size:11.5px;color:#444;font-weight:normal;letter-spacing:-0.18px;">Эффекты</span>
<span class="t" style="left:218.0px;top:26.8px;font-size:11.5px;color:#444;font-weight:normal;letter-spacing:0.35px;transform-origin:0 50%;transform:scaleX(1.030);">Просмотр</span>
<span class="t" style="left:289.0px;top:26.8px;font-size:11.5px;color:#444;font-weight:normal;letter-spacing:0.30px;">Инструменты</span>
<span class="t" style="left:379.0px;top:26.8px;font-size:11.5px;color:#444;font-weight:normal;letter-spacing:0.30px;">Параметры</span>
<span class="t" style="left:457.5px;top:26.8px;font-size:11.5px;color:#444;font-weight:normal;letter-spacing:0.32px;">Окно</span>
<span class="t" style="left:500.7px;top:26.8px;font-size:11.5px;color:#444;font-weight:normal;letter-spacing:0.35px;transform-origin:0 50%;transform:scaleX(1.038);">Помощь</span>
<span class="t" style="left:11.4px;top:85.1px;font-size:11px;color:#000;font-weight:normal;letter-spacing:0.27px;-webkit-text-stroke:0.3px #000;">Новый</span>
<span class="t" style="left:79.5px;top:85.1px;font-size:11px;color:#000;font-weight:normal;letter-spacing:0.33px;-webkit-text-stroke:0.3px #000;">Открыть</span>
<span class="t" style="left:153.7px;top:85.1px;font-size:11px;color:#a8a8a8;font-weight:normal;letter-spacing:0.18px;">Сохранить</span>
<span class="t" style="left:233.3px;top:85.1px;font-size:11px;color:#a8a8a8;font-weight:normal;letter-spacing:0.30px;">Отменить</span>
<span class="t" style="left:314.0px;top:85.1px;font-size:11px;color:#a8a8a8;font-weight:normal;letter-spacing:0.35px;transform-origin:0 50%;transform:scaleX(1.013);">Повторить</span>
<span class="t" style="left:383.4px;top:85.1px;font-size:11px;color:#000;font-weight:normal;letter-spacing:-0.17px;-webkit-text-stroke:0.3px #000;">Вырезать</span>
<span class="t" style="left:443.3px;top:85.1px;font-size:11px;color:#000;font-weight:normal;letter-spacing:0.34px;-webkit-text-stroke:0.3px #000;">Копия</span>
<span class="t" style="left:487.6px;top:85.1px;font-size:11px;color:#a8a8a8;font-weight:normal;letter-spacing:-0.18px;">Вставить</span>
<span class="t" style="left:544.6px;top:85.1px;font-size:11px;color:#a8a8a8;font-weight:normal;letter-spacing:0.19px;">Новый</span>
<span class="t" style="left:591.7px;top:85.1px;font-size:11px;color:#a8a8a8;font-weight:normal;letter-spacing:0.35px;transform-origin:0 50%;transform:scaleX(1.006);">Микс</span>
<span class="t" style="left:630.8px;top:85.1px;font-size:11px;color:#a8a8a8;font-weight:normal;letter-spacing:-0.12px;">Замещать</span>
<span class="t" style="left:693.0px;top:85.1px;font-size:11px;color:#000;font-weight:normal;letter-spacing:0.00px;-webkit-text-stroke:0.3px #000;">Удалить</span>
<span class="t" style="left:746.9px;top:85.1px;font-size:11px;color:#a8a8a8;font-weight:normal;letter-spacing:0.17px;">Обрезать</span>
<span class="t" style="left:819.8px;top:85.1px;font-size:11px;color:#a8a8a8;font-weight:normal;letter-spacing:-0.45px;transform-origin:0 50%;transform:scaleX(0.987);">Весь</span>
<span class="t" style="left:855.7px;top:85.1px;font-size:11px;color:#000;font-weight:normal;letter-spacing:0.02px;-webkit-text-stroke:0.3px #000;">Числом</span>
<span class="t" style="left:906.7px;top:85.1px;font-size:11px;color:#a8a8a8;font-weight:normal;letter-spacing:-0.17px;">Назад</span>
<span class="t" style="left:962.6px;top:85.1px;font-size:11px;color:#a8a8a8;font-weight:normal;letter-spacing:-0.45px;transform-origin:0 50%;transform:scaleX(0.891);">Все</span>
<span class="t" style="left:995.5px;top:85.1px;font-size:11px;color:#000;font-weight:normal;letter-spacing:-0.23px;-webkit-text-stroke:0.3px #000;">Ближе</span>
<span class="t" style="left:32.0px;top:159.0px;font-size:11.5px;color:#999;font-weight:normal;letter-spacing:0.17px;">Безымянный1</span>
<span class="t" style="left:12.6px;top:695.8px;font-size:11px;color:#000;font-weight:normal;letter-spacing:-0.12px;">Стерео</span>
<span class="t" style="left:110.7px;top:695.8px;font-size:11px;color:#000;font-weight:normal;letter-spacing:-0.23px;">10.000</span>
<span class="t" style="left:276.0px;top:695.8px;font-size:11px;color:#000;font-weight:normal;letter-spacing:-0.14px;">0.000 до 10.000 (10.000)</span>
<span class="t" style="left:543.4px;top:695.8px;font-size:11px;color:#000;font-weight:normal;letter-spacing:-0.33px;">0.000</span>
<span class="t" style="left:8.3px;top:714.8px;font-size:11px;color:#000;font-weight:normal;letter-spacing:0.35px;transform-origin:0 50%;transform:scaleX(1.015);">Оригинал</span>
<span class="t" style="left:110.7px;top:714.8px;font-size:11px;color:#000;font-weight:normal;letter-spacing:-0.23px;">10.000</span>
<span class="t" style="left:194.4px;top:714.8px;font-size:11px;color:#000;font-weight:normal;letter-spacing:0.10px;">Wave PCM подписан 16 bit, 44100 Hz, 1411 kbps, стерео</span>
<span class="t" style="left:33.9px;top:181.3px;font-size:11.5px;color:#c8c8ee;font-weight:normal;letter-spacing:-0.45px;transform-origin:0 50%;transform:scaleX(0.990);">1.0</span>
<span class="t" style="left:33.9px;top:231.0px;font-size:11.5px;color:#c8c8ee;font-weight:normal;letter-spacing:-0.45px;transform-origin:0 50%;transform:scaleX(0.990);">0.5</span>
<span class="t" style="left:33.9px;top:280.3px;font-size:11.5px;color:#c8c8ee;font-weight:normal;letter-spacing:-0.45px;transform-origin:0 50%;transform:scaleX(0.990);">0.0</span>
<span class="t" style="left:35.0px;top:330.1px;font-size:11.5px;color:#c8c8ee;font-weight:normal;letter-spacing:-0.21px;">-0.5</span>
<span class="t" style="left:33.9px;top:380.1px;font-size:11.5px;color:#c8c8ee;font-weight:normal;letter-spacing:-0.45px;transform-origin:0 50%;transform:scaleX(0.990);">1.0</span>
<span class="t" style="left:33.9px;top:429.8px;font-size:11.5px;color:#c8c8ee;font-weight:normal;letter-spacing:-0.45px;transform-origin:0 50%;transform:scaleX(0.990);">0.5</span>
<span class="t" style="left:33.9px;top:479.1px;font-size:11.5px;color:#c8c8ee;font-weight:normal;letter-spacing:-0.45px;transform-origin:0 50%;transform:scaleX(0.990);">0.0</span>
<span class="t" style="left:35.0px;top:528.9px;font-size:11.5px;color:#c8c8ee;font-weight:normal;letter-spacing:-0.21px;">-0.5</span>
<span class="t" style="left:31.8px;top:594.2px;font-size:14px;color:#111;font-weight:normal;letter-spacing:0.24px;">0:00</span>
<span class="t" style="left:128.2px;top:594.2px;font-size:14px;color:#111;font-weight:normal;letter-spacing:0.24px;">0:01</span>
<span class="t" style="left:224.7px;top:594.2px;font-size:14px;color:#111;font-weight:normal;letter-spacing:0.24px;">0:02</span>
<span class="t" style="left:321.2px;top:594.2px;font-size:14px;color:#111;font-weight:normal;letter-spacing:0.24px;">0:03</span>
<span class="t" style="left:417.6px;top:594.2px;font-size:14px;color:#111;font-weight:normal;letter-spacing:0.24px;">0:04</span>
<span class="t" style="left:514.0px;top:594.2px;font-size:14px;color:#111;font-weight:normal;letter-spacing:0.24px;">0:05</span>
<span class="t" style="left:610.5px;top:594.2px;font-size:14px;color:#111;font-weight:normal;letter-spacing:0.24px;">0:06</span>
<span class="t" style="left:707.0px;top:594.2px;font-size:14px;color:#111;font-weight:normal;letter-spacing:0.24px;">0:07</span>
<span class="t" style="left:803.4px;top:594.2px;font-size:14px;color:#111;font-weight:normal;letter-spacing:0.24px;">0:08</span>
<span class="t" style="left:899.9px;top:594.2px;font-size:14px;color:#111;font-weight:normal;letter-spacing:0.24px;">0:09</span>
<span class="t" style="left:31.3px;top:668.2px;font-size:10.5px;color:#111;font-weight:normal;letter-spacing:0.35px;transform-origin:0 50%;transform:scaleX(1.013);">0:00.0</span>
<span class="t" style="left:79.5px;top:668.2px;font-size:10.5px;color:#111;font-weight:normal;letter-spacing:0.35px;transform-origin:0 50%;transform:scaleX(1.013);">0:00.5</span>
<span class="t" style="left:127.8px;top:668.2px;font-size:10.5px;color:#111;font-weight:normal;letter-spacing:0.35px;transform-origin:0 50%;transform:scaleX(1.013);">0:01.0</span>
<span class="t" style="left:176.0px;top:668.2px;font-size:10.5px;color:#111;font-weight:normal;letter-spacing:0.35px;transform-origin:0 50%;transform:scaleX(1.013);">0:01.5</span>
<span class="t" style="left:224.2px;top:668.2px;font-size:10.5px;color:#111;font-weight:normal;letter-spacing:0.35px;transform-origin:0 50%;transform:scaleX(1.013);">0:02.0</span>
<span class="t" style="left:272.4px;top:668.2px;font-size:10.5px;color:#111;font-weight:normal;letter-spacing:0.35px;transform-origin:0 50%;transform:scaleX(1.013);">0:02.5</span>
<span class="t" style="left:320.7px;top:668.2px;font-size:10.5px;color:#111;font-weight:normal;letter-spacing:0.35px;transform-origin:0 50%;transform:scaleX(1.013);">0:03.0</span>
<span class="t" style="left:368.9px;top:668.2px;font-size:10.5px;color:#111;font-weight:normal;letter-spacing:0.35px;transform-origin:0 50%;transform:scaleX(1.013);">0:03.5</span>
<span class="t" style="left:417.1px;top:668.2px;font-size:10.5px;color:#111;font-weight:normal;letter-spacing:0.35px;transform-origin:0 50%;transform:scaleX(1.013);">0:04.0</span>
<span class="t" style="left:465.3px;top:668.2px;font-size:10.5px;color:#111;font-weight:normal;letter-spacing:0.35px;transform-origin:0 50%;transform:scaleX(1.013);">0:04.5</span>
<span class="t" style="left:513.5px;top:668.2px;font-size:10.5px;color:#111;font-weight:normal;letter-spacing:0.35px;transform-origin:0 50%;transform:scaleX(1.013);">0:05.0</span>
<span class="t" style="left:561.8px;top:668.2px;font-size:10.5px;color:#111;font-weight:normal;letter-spacing:0.35px;transform-origin:0 50%;transform:scaleX(1.013);">0:05.5</span>
<span class="t" style="left:610.0px;top:668.2px;font-size:10.5px;color:#111;font-weight:normal;letter-spacing:0.35px;transform-origin:0 50%;transform:scaleX(1.013);">0:06.0</span>
<span class="t" style="left:658.2px;top:668.2px;font-size:10.5px;color:#111;font-weight:normal;letter-spacing:0.35px;transform-origin:0 50%;transform:scaleX(1.013);">0:06.5</span>
<span class="t" style="left:706.5px;top:668.2px;font-size:10.5px;color:#111;font-weight:normal;letter-spacing:0.35px;transform-origin:0 50%;transform:scaleX(1.013);">0:07.0</span>
<span class="t" style="left:754.7px;top:668.2px;font-size:10.5px;color:#111;font-weight:normal;letter-spacing:0.35px;transform-origin:0 50%;transform:scaleX(1.013);">0:07.5</span>
<span class="t" style="left:802.9px;top:668.2px;font-size:10.5px;color:#111;font-weight:normal;letter-spacing:0.35px;transform-origin:0 50%;transform:scaleX(1.013);">0:08.0</span>
<span class="t" style="left:851.1px;top:668.2px;font-size:10.5px;color:#111;font-weight:normal;letter-spacing:0.35px;transform-origin:0 50%;transform:scaleX(1.013);">0:08.5</span>
<span class="t" style="left:899.4px;top:668.2px;font-size:10.5px;color:#111;font-weight:normal;letter-spacing:0.35px;transform-origin:0 50%;transform:scaleX(1.013);">0:09.0</span>
<span class="t" style="left:947.6px;top:668.2px;font-size:10.5px;color:#111;font-weight:normal;letter-spacing:0.35px;transform-origin:0 50%;transform:scaleX(1.013);">0:09.5</span>
<div class="a" style="left:667px;top:168px;width:324px;height:515px;background:#f0f0f0;box-shadow:0 0 0 0.700px rgba(120,120,130,0.55),0 2px 9px 1px rgba(0,0,0,0.38)"></div>
<div class="a" style="left:667px;top:168px;width:324px;height:30px;background:#fff"></div>
<div class="a" style="left:668px;top:305px;width:142px;height:30px;background:#000"></div>
<div class="a" style="left:815px;top:304.500px;width:175.500px;height:31px;background:#f4f4f4"></div>
<div class="a" style="left:816.500px;top:305px;width:165.500px;height:30px;background:linear-gradient(90deg,#0a5a0a 0%,#1e6e0a 25%,#5a7a06 50%,#848404 65%,#8a5a04 80%,#821404 96%,#7a0a04 100%)"></div>
<div class="a" style="left:984px;top:305px;width:6px;height:30px;background:#000"></div>
<div class="a" style="left:667px;top:336.500px;width:324px;height:346.500px;background:#000"></div>
<div class="a" style="left:667px;top:509.500px;width:324px;height:2px;background:#d6d6d6"></div>
<div class="a" style="left:990.200px;top:336px;width:1px;height:347.500px;background:#c4c4c4"></div><div class="a" style="left:667px;top:682.600px;width:324px;height:1px;background:#c4c4c4"></div>
<svg width="1023" height="730" viewBox="0 0 1023 730">
<defs><linearGradient id="slg" x1="0" y1="0" x2="1" y2="0"><stop offset="0" stop-color="#6e6e6e"/><stop offset="1" stop-color="#dcdcdc"/></linearGradient></defs>
<g transform="translate(672.500,170.500)"><polyline points="2.4,8.8 6.5,11.3 9.3,7.3 12.7,13.2 17.6,6.4" fill="none" stroke="#ecd21c" stroke-width="1.900"/><rect x="2" y="14.700" width="4.500" height="2" fill="#20c828"/><rect x="6.500" y="14.700" width="6.500" height="2" fill="#f0e020"/><rect x="13" y="14.700" width="5" height="2" fill="#d81818"/></g>
<g stroke="#8c8c8c" stroke-width="1" fill="none"><line x1="872" y1="182.500" x2="882" y2="182.500"/><rect x="917.500" y="177.500" width="9" height="9"/><path d="M963,177.700 L972.500,187.200 M972.500,177.700 L963,187.200"/></g>
<path d="M680,204 L702.500,215.300 L680,226.600 Z" fill="#10de10"/>
<rect x="730.500" y="203.300" width="16.700" height="23.200" fill="#b0b8c6"/>
<path d="M729.800,204.700 L748.700,214.500 L729.800,224.300 Z" fill="#10de10"/>
<path d="M773.800,204.700 L794.600,214.900 L773.800,225 Z" fill="#10de10"/>
<rect x="783" y="202.500" width="1.200" height="25.500" fill="#f4fff0" opacity="0.45"/>
<rect x="795.800" y="201.800" width="3.200" height="25.400" fill="#3c3c44"/>
<path d="M669,248.800 L684.500,241 V256.600 Z M684,248.800 L699.500,241 V256.600 Z" fill="#0a64f0"/>
<path d="M735,248.800 L719.500,241 V256.600 Z M720.500,248.800 L705,241 V256.600 Z" fill="#0a64f0"/>
<rect x="749" y="241" width="6" height="15.500" fill="#b4c8f0"/><rect x="759" y="241" width="6" height="15.500" fill="#b4c8f0"/>
<rect x="785.500" y="241" width="15.500" height="15.500" fill="#b4c8f0"/>
<path d="M677.500,268.800 H696.500 L702.500,274.800 V295.800 H677.500 Z" fill="#f8f8f8" stroke="#888" stroke-width="1"/><path d="M696.500,268.800 V274.800 H702.500 Z" fill="#ddd" stroke="#999" stroke-width="0.700"/>
<path d="M678.500,296.800 H703.500 V276" fill="none" stroke="#bbb" stroke-width="1"/>
<circle cx="690.100" cy="282.800" r="10" fill="#f00808"/>
<rect x="730.500" y="271.500" width="16.700" height="23.200" fill="#b0b8c6"/>
<circle cx="737.900" cy="282.800" r="10" fill="#f00808"/>
<circle cx="778.500" cy="283.500" r="6.500" fill="#0808d8"/><circle cx="778.500" cy="283.500" r="2.600" fill="#58b8f0"/>
<rect x="787" y="277" width="13" height="13" fill="#0808d8"/><path d="M789.500,283.500 L792.500,286.500 L797.500,280.500" fill="none" stroke="#78c8f8" stroke-width="2"/>
<rect x="791" y="308" width="10" height="10" fill="#0a6e0a"/><rect x="791" y="321.500" width="10" height="10" fill="#7a0a0a"/>
<rect x="815.500" y="198.3" width="174.300" height="16.400" fill="#f6f6f6" stroke="#c4c4c4" stroke-width="1"/>
<rect x="831.500" y="198.8" width="143" height="15.400" fill="url(#slg)"/>
<rect x="819.300" y="205.7" width="9.700" height="2" fill="#000"/>
<rect x="977.400" y="205.6" width="9.700" height="2" fill="#000"/><rect x="981.250" y="201.8" width="2" height="9.700" fill="#000"/>
<rect x="958.8" y="198.8" width="15" height="15.400" fill="#ececec"/>
<path d="M960.8,204.0 h3 l6,-5.500 v16 l-6,-5.500 h-3 z" fill="#0a64f0"/>
<rect x="815.500" y="232.2" width="174.300" height="16.400" fill="#f6f6f6" stroke="#c4c4c4" stroke-width="1"/>
<rect x="831.500" y="232.7" width="143" height="15.400" fill="url(#slg)"/>
<rect x="819.300" y="239.6" width="9.700" height="2" fill="#000"/>
<rect x="977.400" y="239.5" width="9.700" height="2" fill="#000"/><rect x="981.250" y="235.6" width="2" height="9.700" fill="#000"/>
<rect x="907.5" y="232.7" width="15" height="15.400" fill="#ececec"/>
<path d="M920.5,240.4 l-5.500,-6 v12 z" fill="#e01010"/>
<path d="M909.0,240.4 l5,-5.500 v11 z" fill="#fff"/>
<rect x="815.500" y="266.4" width="174.300" height="16.400" fill="#f6f6f6" stroke="#c4c4c4" stroke-width="1"/>
<rect x="831.500" y="266.9" width="143" height="15.400" fill="url(#slg)"/>
<rect x="819.300" y="273.8" width="9.700" height="2" fill="#000"/>
<rect x="977.400" y="273.7" width="9.700" height="2" fill="#000"/><rect x="981.250" y="269.8" width="2" height="9.700" fill="#000"/>
<rect x="857.8" y="266.9" width="15" height="15.400" fill="#ececec"/>
<path d="M860.8,270.1 l9,9 m0,-9 l-9,9" stroke="#1a64e8" stroke-width="2.200" fill="none"/>
<line x1="691.5" y1="352.5" x2="990.500" y2="352.5" stroke="#b4b4b4" stroke-width="1"/>
<line x1="686.5" y1="367.5" x2="990.500" y2="367.5" stroke="#b4b4b4" stroke-width="1"/>
<line x1="691.5" y1="383.5" x2="990.500" y2="383.5" stroke="#b4b4b4" stroke-width="1"/>
<line x1="686.5" y1="398.5" x2="990.500" y2="398.5" stroke="#b4b4b4" stroke-width="1"/>
<line x1="691.5" y1="414.5" x2="990.500" y2="414.5" stroke="#b4b4b4" stroke-width="1"/>
<line x1="686.5" y1="430.5" x2="990.500" y2="430.5" stroke="#b4b4b4" stroke-width="1"/>
<line x1="691.5" y1="445.5" x2="990.500" y2="445.5" stroke="#b4b4b4" stroke-width="1"/>
<line x1="686.5" y1="461.5" x2="990.500" y2="461.5" stroke="#b4b4b4" stroke-width="1"/>
<line x1="691.5" y1="476.5" x2="990.500" y2="476.5" stroke="#b4b4b4" stroke-width="1"/>
<line x1="691.500" y1="336.4" x2="691.500" y2="493.1" stroke="#fff" stroke-width="1"/>
<line x1="690" y1="336.9" x2="690" y2="492.4" stroke="#ddd" stroke-width="2" stroke-dasharray="1,2.120"/>
<line x1="686.500" y1="492.4" x2="692" y2="492.4" stroke="#ddd" stroke-width="1"/>
<rect x="693.5" y="491.6" width="25.300" height="1.600" fill="#c81818"/>
<rect x="719.3" y="491.9" width="1" height="1" fill="#ccc"/>
<rect x="720.5" y="491.6" width="25.300" height="1.600" fill="#c81818"/>
<rect x="746.3" y="491.9" width="1" height="1" fill="#ccc"/>
<rect x="747.5" y="491.6" width="25.300" height="1.600" fill="#c81818"/>
<rect x="773.3" y="491.9" width="1" height="1" fill="#ccc"/>
<rect x="774.5" y="491.6" width="25.300" height="1.600" fill="#c81818"/>
<rect x="800.3" y="491.9" width="1" height="1" fill="#ccc"/>
<rect x="801.5" y="491.6" width="25.300" height="1.600" fill="#c81818"/>
<rect x="827.3" y="491.9" width="1" height="1" fill="#ccc"/>
<rect x="828.5" y="491.6" width="25.300" height="1.600" fill="#c81818"/>
<rect x="854.3" y="491.9" width="1" height="1" fill="#ccc"/>
<rect x="855.5" y="491.6" width="25.300" height="1.600" fill="#c81818"/>
<rect x="881.3" y="491.9" width="1" height="1" fill="#ccc"/>
<rect x="882.5" y="491.6" width="25.300" height="1.600" fill="#c81818"/>
<rect x="908.3" y="491.9" width="1" height="1" fill="#ccc"/>
<rect x="909.5" y="491.6" width="25.300" height="1.600" fill="#c81818"/>
<rect x="935.3" y="491.9" width="1" height="1" fill="#ccc"/>
<rect x="936.5" y="491.6" width="25.300" height="1.600" fill="#c81818"/>
<rect x="962.3" y="491.9" width="1" height="1" fill="#ccc"/>
<rect x="963.5" y="491.6" width="25.300" height="1.600" fill="#c81818"/>
<line x1="691.5" y1="526.5" x2="990.500" y2="526.5" stroke="#b4b4b4" stroke-width="1"/>
<line x1="686.5" y1="542.5" x2="990.500" y2="542.5" stroke="#b4b4b4" stroke-width="1"/>
<line x1="691.5" y1="557.5" x2="990.500" y2="557.5" stroke="#b4b4b4" stroke-width="1"/>
<line x1="686.5" y1="573.5" x2="990.500" y2="573.5" stroke="#b4b4b4" stroke-width="1"/>
<line x1="691.5" y1="588.5" x2="990.500" y2="588.5" stroke="#b4b4b4" stroke-width="1"/>
<line x1="686.5" y1="604.5" x2="990.500" y2="604.5" stroke="#b4b4b4" stroke-width="1"/>
<line x1="691.5" y1="620.5" x2="990.500" y2="620.5" stroke="#b4b4b4" stroke-width="1"/>
<line x1="686.5" y1="635.5" x2="990.500" y2="635.5" stroke="#b4b4b4" stroke-width="1"/>
<line x1="691.5" y1="651.5" x2="990.500" y2="651.5" stroke="#b4b4b4" stroke-width="1"/>
<line x1="691.500" y1="510.9" x2="691.500" y2="667.6" stroke="#fff" stroke-width="1"/>
<line x1="690" y1="511.4" x2="690" y2="666.9" stroke="#ddd" stroke-width="2" stroke-dasharray="1,2.120"/>
<line x1="686.500" y1="666.9" x2="692" y2="666.9" stroke="#ddd" stroke-width="1"/>
<rect x="693.5" y="666.1" width="25.300" height="1.600" fill="#c81818"/>
<rect x="719.3" y="666.4" width="1" height="1" fill="#ccc"/>
<rect x="720.5" y="666.1" width="25.300" height="1.600" fill="#c81818"/>
<rect x="746.3" y="666.4" width="1" height="1" fill="#ccc"/>
<rect x="747.5" y="666.1" width="25.300" height="1.600" fill="#c81818"/>
<rect x="773.3" y="666.4" width="1" height="1" fill="#ccc"/>
<rect x="774.5" y="666.1" width="25.300" height="1.600" fill="#c81818"/>
<rect x="800.3" y="666.4" width="1" height="1" fill="#ccc"/>
<rect x="801.5" y="666.1" width="25.300" height="1.600" fill="#c81818"/>
<rect x="827.3" y="666.4" width="1" height="1" fill="#ccc"/>
<rect x="828.5" y="666.1" width="25.300" height="1.600" fill="#c81818"/>
<rect x="854.3" y="666.4" width="1" height="1" fill="#ccc"/>
<rect x="855.5" y="666.1" width="25.300" height="1.600" fill="#c81818"/>
<rect x="881.3" y="666.4" width="1" height="1" fill="#ccc"/>
<rect x="882.5" y="666.1" width="25.300" height="1.600" fill="#c81818"/>
<rect x="908.3" y="666.4" width="1" height="1" fill="#ccc"/>
<rect x="909.5" y="666.1" width="25.300" height="1.600" fill="#c81818"/>
<rect x="935.3" y="666.4" width="1" height="1" fill="#ccc"/>
<rect x="936.5" y="666.1" width="25.300" height="1.600" fill="#c81818"/>
<rect x="962.3" y="666.4" width="1" height="1" fill="#ccc"/>
<rect x="963.5" y="666.1" width="25.300" height="1.600" fill="#c81818"/>
</svg>
<span class="t" style="left:696.5px;top:177.8px;font-size:11.5px;color:#999;font-weight:normal;letter-spacing:0.13px;">Управление</span>
<span class="t" style="left:858.7px;top:217.5px;font-size:11px;color:#000;font-weight:normal;letter-spacing:0.07px;">Громкость: 100%</span>
<span class="t" style="left:869.0px;top:251.7px;font-size:11px;color:#000;font-weight:normal;letter-spacing:-0.05px;">Баланс: 19%</span>
<span class="t" style="left:863.8px;top:285.6px;font-size:11px;color:#000;font-weight:normal;letter-spacing:0.08px;">Скорость: 1.00</span>
<span class="t" style="left:671.0px;top:308.5px;font-size:25px;color:#18e018;font-weight:normal;letter-spacing:-0.45px;transform-origin:0 50%;transform:scaleX(0.999);">00:00:00.0</span>
<span class="t" style="left:681.5px;top:339.4px;font-size:10.5px;color:#d8d8d8;font-weight:normal;letter-spacing:0.16px;">0</span>
<span class="t" style="left:672.2px;top:370.6px;font-size:10.5px;color:#d8d8d8;font-weight:normal;letter-spacing:0.04px;">-20</span>
<span class="t" style="left:672.2px;top:401.8px;font-size:10.5px;color:#d8d8d8;font-weight:normal;letter-spacing:0.04px;">-40</span>
<span class="t" style="left:672.2px;top:433.0px;font-size:10.5px;color:#d8d8d8;font-weight:normal;letter-spacing:0.04px;">-60</span>
<span class="t" style="left:672.2px;top:464.2px;font-size:10.5px;color:#d8d8d8;font-weight:normal;letter-spacing:0.04px;">-80</span>
<span class="t" style="left:667.4px;top:495.6px;font-size:10.5px;color:#d8d8d8;font-weight:normal;letter-spacing:-0.23px;">-100</span>
<span class="t" style="left:700.7px;top:495.7px;font-size:10.5px;color:#d8d8d8;font-weight:normal;letter-spacing:-0.24px;">16</span>
<span class="t" style="left:697.6px;top:479.6px;font-size:10.5px;color:#e02020;font-weight:normal;letter-spacing:-0.04px;">100</span>
<span class="t" style="left:727.6px;top:495.7px;font-size:10.5px;color:#d8d8d8;font-weight:normal;letter-spacing:-0.24px;">32</span>
<span class="t" style="left:724.5px;top:479.6px;font-size:10.5px;color:#e02020;font-weight:normal;letter-spacing:-0.04px;">100</span>
<span class="t" style="left:754.6px;top:495.7px;font-size:10.5px;color:#d8d8d8;font-weight:normal;letter-spacing:-0.24px;">64</span>
<span class="t" style="left:751.5px;top:479.6px;font-size:10.5px;color:#e02020;font-weight:normal;letter-spacing:-0.04px;">100</span>
<span class="t" style="left:778.9px;top:495.7px;font-size:10.5px;color:#d8d8d8;font-weight:normal;letter-spacing:-0.34px;">129</span>
<span class="t" style="left:778.4px;top:479.6px;font-size:10.5px;color:#e02020;font-weight:normal;letter-spacing:-0.04px;">100</span>
<span class="t" style="left:805.8px;top:495.7px;font-size:10.5px;color:#d8d8d8;font-weight:normal;letter-spacing:-0.34px;">258</span>
<span class="t" style="left:805.4px;top:479.6px;font-size:10.5px;color:#e02020;font-weight:normal;letter-spacing:-0.04px;">100</span>
<span class="t" style="left:832.8px;top:495.7px;font-size:10.5px;color:#d8d8d8;font-weight:normal;letter-spacing:-0.34px;">517</span>
<span class="t" style="left:832.3px;top:479.6px;font-size:10.5px;color:#e02020;font-weight:normal;letter-spacing:-0.04px;">100</span>
<span class="t" style="left:862.8px;top:495.7px;font-size:10.5px;color:#d8d8d8;font-weight:normal;letter-spacing:-0.30px;">1k</span>
<span class="t" style="left:859.3px;top:479.6px;font-size:10.5px;color:#e02020;font-weight:normal;letter-spacing:-0.04px;">100</span>
<span class="t" style="left:889.7px;top:495.7px;font-size:10.5px;color:#d8d8d8;font-weight:normal;letter-spacing:-0.30px;">2k</span>
<span class="t" style="left:886.2px;top:479.6px;font-size:10.5px;color:#e02020;font-weight:normal;letter-spacing:-0.04px;">100</span>
<span class="t" style="left:916.6px;top:495.7px;font-size:10.5px;color:#d8d8d8;font-weight:normal;letter-spacing:-0.30px;">4k</span>
<span class="t" style="left:913.2px;top:479.6px;font-size:10.5px;color:#e02020;font-weight:normal;letter-spacing:-0.04px;">100</span>
<span class="t" style="left:943.6px;top:495.7px;font-size:10.5px;color:#d8d8d8;font-weight:normal;letter-spacing:-0.30px;">8k</span>
<span class="t" style="left:940.1px;top:479.6px;font-size:10.5px;color:#e02020;font-weight:normal;letter-spacing:-0.04px;">100</span>
<span class="t" style="left:967.8px;top:495.7px;font-size:10.5px;color:#d8d8d8;font-weight:normal;letter-spacing:-0.31px;">16k</span>
<span class="t" style="left:967.1px;top:479.6px;font-size:10.5px;color:#e02020;font-weight:normal;letter-spacing:-0.04px;">100</span>
<span class="t" style="left:681.5px;top:513.9px;font-size:10.5px;color:#d8d8d8;font-weight:normal;letter-spacing:0.16px;">0</span>
<span class="t" style="left:672.2px;top:545.1px;font-size:10.5px;color:#d8d8d8;font-weight:normal;letter-spacing:0.04px;">-20</span>
<span class="t" style="left:672.2px;top:576.3px;font-size:10.5px;color:#d8d8d8;font-weight:normal;letter-spacing:0.04px;">-40</span>
<span class="t" style="left:672.2px;top:607.5px;font-size:10.5px;color:#d8d8d8;font-weight:normal;letter-spacing:0.04px;">-60</span>
<span class="t" style="left:672.2px;top:638.7px;font-size:10.5px;color:#d8d8d8;font-weight:normal;letter-spacing:0.04px;">-80</span>
<span class="t" style="left:667.4px;top:670.1px;font-size:10.5px;color:#d8d8d8;font-weight:normal;letter-spacing:-0.23px;">-100</span>
<span class="t" style="left:700.7px;top:670.2px;font-size:10.5px;color:#d8d8d8;font-weight:normal;letter-spacing:-0.24px;">16</span>
<span class="t" style="left:697.6px;top:654.1px;font-size:10.5px;color:#e02020;font-weight:normal;letter-spacing:-0.04px;">100</span>
<span class="t" style="left:727.6px;top:670.2px;font-size:10.5px;color:#d8d8d8;font-weight:normal;letter-spacing:-0.24px;">32</span>
<span class="t" style="left:724.5px;top:654.1px;font-size:10.5px;color:#e02020;font-weight:normal;letter-spacing:-0.04px;">100</span>
<span class="t" style="left:754.6px;top:670.2px;font-size:10.5px;color:#d8d8d8;font-weight:normal;letter-spacing:-0.24px;">64</span>
<span class="t" style="left:751.5px;top:654.1px;font-size:10.5px;color:#e02020;font-weight:normal;letter-spacing:-0.04px;">100</span>
<span class="t" style="left:778.9px;top:670.2px;font-size:10.5px;color:#d8d8d8;font-weight:normal;letter-spacing:-0.34px;">129</span>
<span class="t" style="left:778.4px;top:654.1px;font-size:10.5px;color:#e02020;font-weight:normal;letter-spacing:-0.04px;">100</span>
<span class="t" style="left:805.8px;top:670.2px;font-size:10.5px;color:#d8d8d8;font-weight:normal;letter-spacing:-0.34px;">258</span>
<span class="t" style="left:805.4px;top:654.1px;font-size:10.5px;color:#e02020;font-weight:normal;letter-spacing:-0.04px;">100</span>
<span class="t" style="left:832.8px;top:670.2px;font-size:10.5px;color:#d8d8d8;font-weight:normal;letter-spacing:-0.34px;">517</span>
<span class="t" style="left:832.3px;top:654.1px;font-size:10.5px;color:#e02020;font-weight:normal;letter-spacing:-0.04px;">100</span>
<span class="t" style="left:862.8px;top:670.2px;font-size:10.5px;color:#d8d8d8;font-weight:normal;letter-spacing:-0.30px;">1k</span>
<span class="t" style="left:859.3px;top:654.1px;font-size:10.5px;color:#e02020;font-weight:normal;letter-spacing:-0.04px;">100</span>
<span class="t" style="left:889.7px;top:670.2px;font-size:10.5px;color:#d8d8d8;font-weight:normal;letter-spacing:-0.30px;">2k</span>
<span class="t" style="left:886.2px;top:654.1px;font-size:10.5px;color:#e02020;font-weight:normal;letter-spacing:-0.04px;">100</span>
<span class="t" style="left:916.6px;top:670.2px;font-size:10.5px;color:#d8d8d8;font-weight:normal;letter-spacing:-0.30px;">4k</span>
<span class="t" style="left:913.2px;top:654.1px;font-size:10.5px;color:#e02020;font-weight:normal;letter-spacing:-0.04px;">100</span>
<span class="t" style="left:943.6px;top:670.2px;font-size:10.5px;color:#d8d8d8;font-weight:normal;letter-spacing:-0.30px;">8k</span>
<span class="t" style="left:940.1px;top:654.1px;font-size:10.5px;color:#e02020;font-weight:normal;letter-spacing:-0.04px;">100</span>
<span class="t" style="left:967.8px;top:670.2px;font-size:10.5px;color:#d8d8d8;font-weight:normal;letter-spacing:-0.31px;">16k</span>
<span class="t" style="left:967.1px;top:654.1px;font-size:10.5px;color:#e02020;font-weight:normal;letter-spacing:-0.04px;">100</span>
<svg width="1023" height="730" viewBox="0 0 1023 730" font-family="Liberation Sans, sans-serif" style="will-change:transform"><g font-size="29.500" fill="#1a86ee" stroke="#1a86ee" stroke-width="0.500" text-anchor="middle"><text transform="translate(727.400,222.300) scale(0.740,1)">{</text><text transform="translate(750.400,222.300) scale(0.740,1)">}</text><text transform="translate(727.400,290.500) scale(0.740,1)">{</text><text transform="translate(750.400,290.500) scale(0.740,1)">}</text></g></svg>
</body></html>
